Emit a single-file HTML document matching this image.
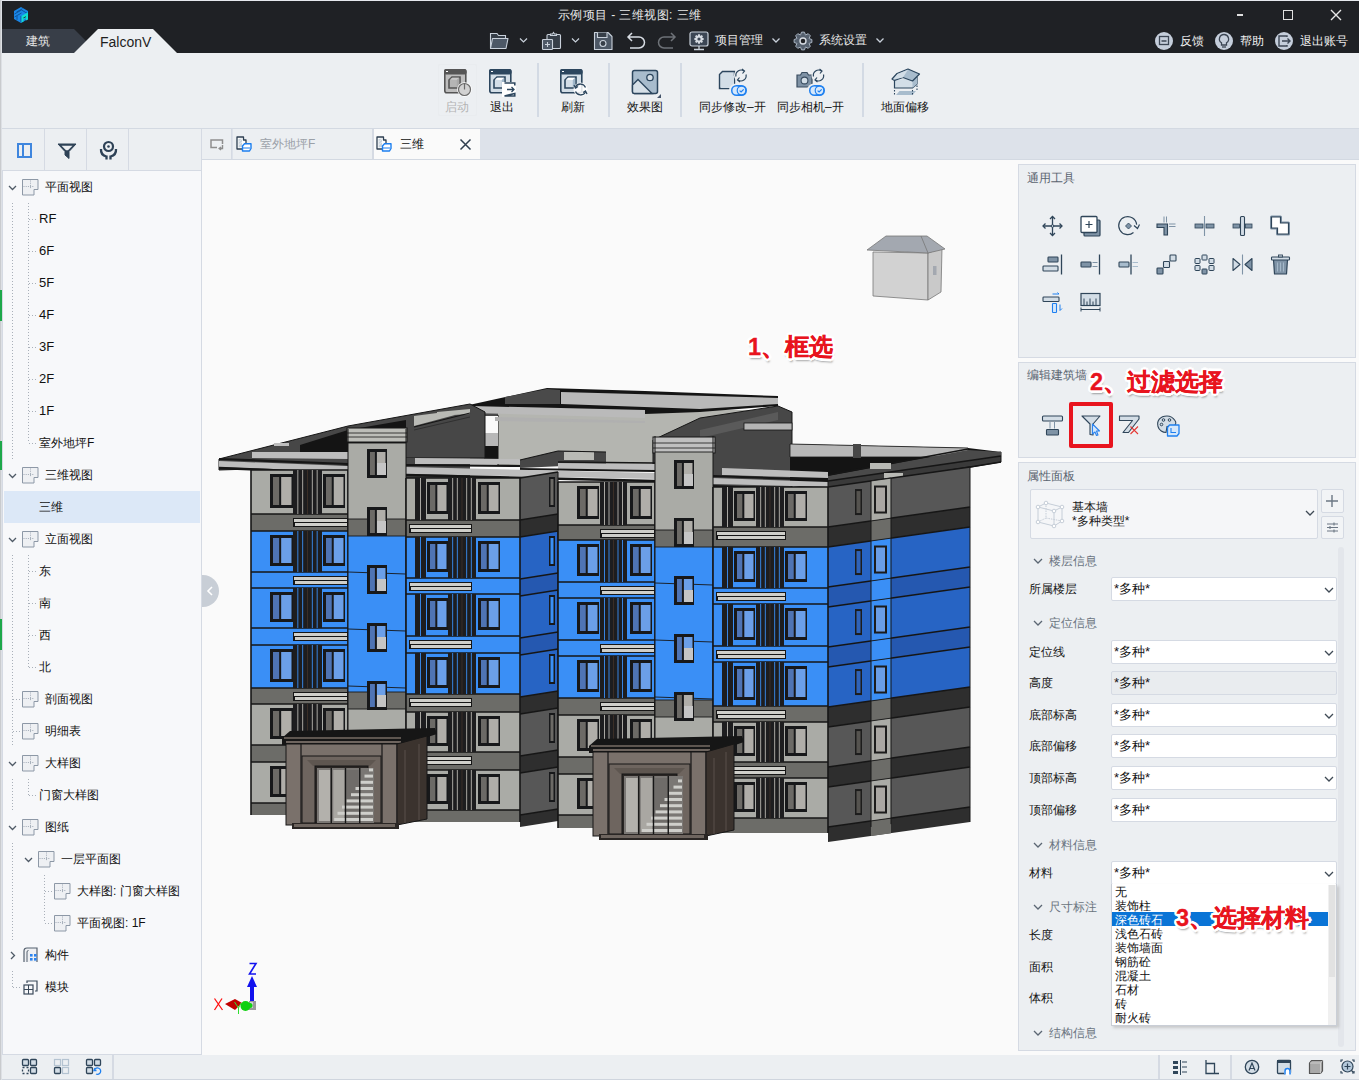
<!DOCTYPE html><html><head><meta charset="utf-8"><style>
*{box-sizing:border-box;margin:0;padding:0}
html,body{width:1359px;height:1080px;overflow:hidden;background:#fafafa;font-family:"Liberation Sans",sans-serif;font-size:12px;color:#1b1b1b}
.a{position:absolute}
.t{position:absolute;white-space:nowrap;line-height:14px}
svg{position:absolute;overflow:visible}
</style></head><body><div class="a" style="left:0px;top:0px;width:1359px;height:1080px;background:#fafafa"></div>
<div class="a" style="left:0px;top:0px;width:1359px;height:53px;background:#1f2125"></div>
<div class="a" style="left:0px;top:0px;width:1359px;height:1px;background:#e6e9ee"></div>
<div class="a" style="left:0px;top:0px;width:2px;height:1080px;background:#dde0e5"></div>
<div class="a" style="left:0px;top:0px;width:1px;height:1080px;background:#c9cbce"></div>
<div class="a" style="left:0px;top:290px;width:2px;height:31px;background:#1ea84a"></div>
<div class="a" style="left:0px;top:441px;width:2px;height:29px;background:#1ea84a"></div>
<div class="a" style="left:0px;top:619px;width:2px;height:31px;background:#1ea84a"></div>
<svg style="left:13px;top:6px" width="18" height="18" viewBox="0 0 18 18">
<path d="M1 5 L8 1 L15 5 L15 13 L8 17 L1 13 Z" fill="#1a86e6"/>
<path d="M1.5 8 L8.5 4 L14.5 7.5 M1.5 11 L8.5 7 M3.5 6 L9.5 2.7 M4 13.8 L4 10 M8 16 L8 10" stroke="#0b4f94" stroke-width="0.9" fill="none"/>
<path d="M8.5 16.5 L8.5 10 L15 6.3 L15 13.5 L13 14.6 L13 12 L10.5 13.4 L10.5 15.5 Z" fill="#10dcd0"/>
<path d="M10.5 11.6 L13 10.2 L13 11 L10.5 12.4 Z" fill="#1f2125"/>
</svg>
<div class="t" style="left:558px;top:8px;color:#e8e8e8;font-size:12px;letter-spacing:0.4px">示例项目 - 三维视图: 三维</div>
<div class="a" style="left:1237px;top:14px;width:6px;height:2px;background:#e0e0e0"></div>
<div class="a" style="left:1283px;top:10px;width:10px;height:10px;border:1.5px solid #e0e0e0"></div>
<svg style="left:1330px;top:9px" width="12" height="12"><path d="M1 1 L11 11 M11 1 L1 11" stroke="#e8e8e8" stroke-width="1.4"/></svg>
<svg style="left:0;top:0" width="200" height="55"><polygon points="2,29 74,29 98,53 2,53" fill="#383e48"/><polygon points="74,53 98,29 153,29 177,53" fill="#eceff2"/></svg>
<div class="t" style="left:26px;top:34px;color:#e6e6e6;font-size:12px">建筑</div>
<div class="t" style="left:100px;top:34px;color:#1e1e1e;font-size:14px;line-height:16px">FalconV</div>
<svg style="left:485px;top:27px" width="200" height="26" viewBox="485 27 200 26">
<path d="M490.5 48.5 V33.5 H497 L498.5 35.5 H505.5 V38.5" fill="#363e48" stroke="#c9d1db" stroke-width="1.1"/>
<path d="M490.5 48.5 L492.5 38.5 H508 L506 48.5 Z" fill="#4d5866" stroke="#c9d1db" stroke-width="1.1" stroke-linejoin="round"/>
<path d="M520 38.5 l3.5 3.5 l3.5 -3.5" stroke="#c9d1db" stroke-width="1.2" fill="none"/>
<rect x="547" y="34.5" width="13.5" height="14" rx="1" fill="#363e48" stroke="#c9d1db" stroke-width="1.1"/>
<path d="M550.5 35.5 V34 H552.5 L553.5 32.5 L554.5 34 H556.5 V35.5 Z" fill="#363e48" stroke="#c9d1db" stroke-width="1.1"/>
<rect x="542.5" y="39.5" width="10" height="10" rx="0.8" fill="#4d5866" stroke="#c9d1db" stroke-width="1.1"/>
<path d="M547.5 42 V47 M545 44.5 H550" stroke="#c9d1db" stroke-width="1.1"/>
<path d="M572 38.5 l3.5 3.5 l3.5 -3.5" stroke="#c9d1db" stroke-width="1.2" fill="none"/>
<path d="M594.5 32.5 H608 L612 36.5 V49.5 H594.5 Z" fill="#4d5866" stroke="#c9d1db" stroke-width="1.1" stroke-linejoin="round"/>
<path d="M597.5 32.5 V37.5 H607 V32.5" fill="#363e48" stroke="#c9d1db" stroke-width="1.1"/>
<circle cx="603" cy="43.5" r="3" fill="#363e48" stroke="#c9d1db" stroke-width="1.1"/>
<path d="M632 33 L628 37 L632 41 M628.5 37 H639 a5.5 5.5 0 0 1 0 11 H630" stroke="#d8dde4" stroke-width="1.5" fill="none"/>
<path d="M671 33 L675 37 L671 41 M674.5 37 H664 a5.5 5.5 0 0 0 0 11 H673" stroke="#6e7278" stroke-width="1.5" fill="none"/>
</svg>
<svg style="left:689px;top:31px" width="20" height="20" viewBox="0 0 20 20">
<rect x="1" y="1" width="18" height="14" rx="2" fill="#3c4654" stroke="#c9d1db" stroke-width="1.2"/>
<path d="M10 15 v3 M5 18.5 h10" stroke="#c9d1db" stroke-width="1.3"/>
<path d="M13.17,6.76 L14.73,7.16 L14.73,8.84 L13.17,9.24 L13.12,9.36 L13.94,10.74 L12.74,11.94 L11.36,11.12 L11.24,11.17 L10.84,12.73 L9.16,12.73 L8.76,11.17 L8.64,11.12 L7.26,11.94 L6.06,10.74 L6.88,9.36 L6.83,9.24 L5.27,8.84 L5.27,7.16 L6.83,6.76 L6.88,6.64 L6.06,5.26 L7.26,4.06 L8.64,4.88 L8.76,4.83 L9.16,3.27 L10.84,3.27 L11.24,4.83 L11.36,4.88 L12.74,4.06 L13.94,5.26 L13.12,6.64 Z" fill="#d6dbe2"/>
<circle cx="10" cy="8" r="1.6" fill="#3c4654"/>
</svg>
<div class="t" style="left:715px;top:33px;color:#e6e6e6;font-size:12px">项目管理</div>
<svg style="left:771px;top:37px" width="10" height="8"><path d="M1.5 1.5 l3.5 3.5 l3.5 -3.5" stroke="#c9d1db" stroke-width="1.3" fill="none"/></svg>
<svg style="left:793px;top:31px" width="20" height="20" viewBox="0 0 20 20">
<path d="M16.15,7.59 L18.88,8.52 L18.88,11.48 L16.15,12.41 L16.05,12.64 L17.32,15.23 L15.23,17.32 L12.64,16.05 L12.41,16.15 L11.48,18.88 L8.52,18.88 L7.59,16.15 L7.36,16.05 L4.77,17.32 L2.68,15.23 L3.95,12.64 L3.85,12.41 L1.12,11.48 L1.12,8.52 L3.85,7.59 L3.95,7.36 L2.68,4.77 L4.77,2.68 L7.36,3.95 L7.59,3.85 L8.52,1.12 L11.48,1.12 L12.41,3.85 L12.64,3.95 L15.23,2.68 L17.32,4.77 L16.05,7.36 Z" fill="#55606e" stroke="#a9b4c2" stroke-width="1"/>
<circle cx="10" cy="10" r="3" fill="#1f2125" stroke="#d6dbe2" stroke-width="1.4"/>
</svg>
<div class="t" style="left:819px;top:33px;color:#e6e6e6;font-size:12px">系统设置</div>
<svg style="left:875px;top:37px" width="10" height="8"><path d="M1.5 1.5 l3.5 3.5 l3.5 -3.5" stroke="#c9d1db" stroke-width="1.3" fill="none"/></svg>
<svg style="left:1154px;top:31px" width="200" height="20" viewBox="0 0 200 20">
<circle cx="10" cy="10" r="9" fill="#c5cedb"/>
<rect x="5.5" y="5.5" width="9" height="8" fill="none" stroke="#3c4654" stroke-width="1.3"/>
<path d="M7.5 10 h5" stroke="#3c4654" stroke-width="1.5"/>
<circle cx="70" cy="10" r="9" fill="#c5cedb"/>
<path d="M70 3.5 a4.5 4.5 0 0 1 2.5 8.3 v2.2 h-5 v-2.2 a4.5 4.5 0 0 1 2.5 -8.3 Z" fill="none" stroke="#3c4654" stroke-width="1.3"/>
<path d="M68 16 h4" stroke="#3c4654" stroke-width="1.3"/>
<circle cx="130" cy="10" r="9" fill="#c5cedb"/>
<path d="M133 6 v-1 h-8 v10 h8 v-1" fill="none" stroke="#3c4654" stroke-width="1.4"/>
<path d="M128 10 h8 M133.5 7.5 l2.5 2.5 l-2.5 2.5" fill="none" stroke="#3c4654" stroke-width="1.4"/>
</svg>
<div class="t" style="left:1180px;top:34px;color:#f0f0f0;font-size:12px">反馈</div>
<div class="t" style="left:1240px;top:34px;color:#f0f0f0;font-size:12px">帮助</div>
<div class="t" style="left:1300px;top:34px;color:#f0f0f0;font-size:12px">退出账号</div>
<div class="a" style="left:2px;top:53px;width:1357px;height:75px;background:#eceff2"></div>
<div class="a" style="left:2px;top:128px;width:1357px;height:1px;background:#d3d9e2"></div>
<div class="a" style="left:537px;top:63px;width:2px;height:54px;background:#d3dae4"></div>
<div class="a" style="left:608px;top:63px;width:2px;height:54px;background:#d3dae4"></div>
<div class="a" style="left:680px;top:63px;width:2px;height:54px;background:#d3dae4"></div>
<div class="a" style="left:862px;top:63px;width:2px;height:54px;background:#d3dae4"></div>
<div class="a" style="left:438px;top:64px;width:39px;height:52px;border:1px solid #e9ecef;border-radius:2px"></div>
<svg style="left:444px;top:69px" width="30" height="30" viewBox="0 0 30 30">
<rect x="0.8" y="0.8" width="21" height="23" rx="2" fill="#bdbdbd" stroke="#555" stroke-width="1.6"/>
<rect x="0" y="0" width="22.6" height="5.5" rx="2" fill="#555"/>
<rect x="2" y="2" width="2" height="1" fill="#fff"/>
<path d="M5 11 L8 8 H16 V19 H5 Z" fill="#b5b5b5" stroke="#555" stroke-width="1.6"/>
<path d="M5.8 10.6 L8.3 8.8 H15 L12.5 11 Z" fill="#c8c8c8"/>
<path d="M15.2 9 V18 L12.8 18 V11 Z" fill="#a8a8a8"/>
</svg>
<svg style="left:457px;top:82px" width="15" height="15" viewBox="0 0 15 15"><circle cx="7.5" cy="7.5" r="6.3" fill="#d2d2d2" stroke="#fff" stroke-width="2"/><circle cx="7.5" cy="7.5" r="6" fill="#d2d2d2" stroke="#6a6a6a" stroke-width="1.2"/><path d="M7.5 1 V7.5" stroke="#6a6a6a" stroke-width="1.2"/></svg>
<div class="t" style="left:445px;top:100px;color:#b4b4b4;font-size:12px">启动</div>
<svg style="left:489px;top:69px" width="30" height="30" viewBox="0 0 30 30">
<rect x="0.8" y="0.8" width="21" height="23" rx="2" fill="#d3dee7" stroke="#2c465e" stroke-width="1.6"/>
<rect x="0" y="0" width="22.6" height="5.5" rx="2" fill="#2c465e"/>
<rect x="2" y="2" width="2" height="1" fill="#fff"/>
<path d="M5 11 L8 8 H16 V19 H5 Z" fill="#d3dee7" stroke="#2c465e" stroke-width="1.6"/>
<path d="M5.8 10.6 L8.3 8.8 H15 L12.5 11 Z" fill="#ffffff"/>
<path d="M15.2 9 V18 L12.8 18 V11 Z" fill="#9fb6c9"/>
</svg>
<svg style="left:502px;top:82px" width="16" height="16" viewBox="0 0 16 16"><rect x="0" y="0" width="14" height="15" fill="#fff"/><path d="M2.5 1 H12.8 V3.5 M12.8 11.5 V14 H2.5 Z" fill="#fff" stroke="#2c465e" stroke-width="1.6"/><path d="M5 7.5 H12 M9.5 5 L12 7.5 L9.5 10" stroke="#2c465e" stroke-width="1.3" fill="none"/></svg>
<div class="t" style="left:490px;top:100px;color:#151515;font-size:12px">退出</div>
<svg style="left:560px;top:69px" width="30" height="30" viewBox="0 0 30 30">
<rect x="0.8" y="0.8" width="21" height="23" rx="2" fill="#d3dee7" stroke="#2c465e" stroke-width="1.6"/>
<rect x="0" y="0" width="22.6" height="5.5" rx="2" fill="#2c465e"/>
<rect x="2" y="2" width="2" height="1" fill="#fff"/>
<path d="M5 11 L8 8 H16 V19 H5 Z" fill="#d3dee7" stroke="#2c465e" stroke-width="1.6"/>
<path d="M5.8 10.6 L8.3 8.8 H15 L12.5 11 Z" fill="#ffffff"/>
<path d="M15.2 9 V18 L12.8 18 V11 Z" fill="#9fb6c9"/>
</svg>
<svg style="left:573px;top:82px" width="16" height="16" viewBox="0 0 16 16"><circle cx="7.5" cy="7.5" r="7" fill="#fff" fill-opacity="0.85"/><path d="M2.5 5 A5.5 5.5 0 0 1 12.5 5.5 M12.5 10 A5.5 5.5 0 0 1 2.5 9.5" stroke="#2c465e" stroke-width="1.3" fill="none"/><path d="M1 3 L2.5 6 L5 4.5 M14 12 L12.5 9 L10 10.5" stroke="#2c465e" stroke-width="1.3" fill="none"/></svg>
<div class="t" style="left:561px;top:100px;color:#151515;font-size:12px">刷新</div>
<svg style="left:631px;top:69px" width="32" height="30" viewBox="0 0 32 30">
<rect x="1.5" y="1.5" width="25" height="23" rx="2" fill="#a8bccd" stroke="#2c465e" stroke-width="1.5"/>
<path d="M1.5 16 L7 10.5 L21 24.5 H3.5 a2 2 0 0 1 -2 -2 Z" fill="#d6e0e8" stroke="#2c465e" stroke-width="1.4"/>
<circle cx="19" cy="8.5" r="3.2" fill="#d6e0e8" stroke="#2c465e" stroke-width="1.3"/>
<path d="M30 25 V29 H26 Z" fill="#44546a"/>
</svg>
<div class="t" style="left:627px;top:100px;color:#151515;font-size:12px">效果图</div>
<svg style="left:715px;top:66px" width="36" height="34" viewBox="715 66 36 34">
<path d="M719.5 74.5 L722.5 71.5 H734.5 V88.5 H719.5 Z" fill="#d3dee7" stroke="#2c465e" stroke-width="1.4"/>
<rect x="721" y="76" width="13" height="12" fill="#d3dee7"/>
<circle cx="741" cy="75.5" r="7" fill="#eceff2"/>
<path d="M736 76.5 A5.2 5.2 0 0 1 744 71.0 M746 74.5 A5.2 5.2 0 0 1 738 80.0" stroke="#2c465e" stroke-width="1.2" fill="none"/><path d="M742 69.0 L744.5 71.0 L742.5 73.5 M740 82.0 L737.5 80.0 L739.5 77.5" stroke="#2c465e" stroke-width="1.2" fill="none"/>
<rect x="729" y="83.5" width="20" height="14" rx="7" fill="#eceff2"/>
<rect x="731" y="85" width="16" height="11" rx="5.5" fill="#1f80f0"/><circle cx="736.5" cy="90.5" r="4" fill="#d6e8fb"/><circle cx="741.5" cy="90.5" r="4.3" fill="#d6e8fb" stroke="#1f80f0" stroke-width="1.2"/><path d="M739.6 90.6 l1.5 1.4 l2.6 -2.6" stroke="#1f80f0" stroke-width="1.2" fill="none"/>
</svg>
<div class="t" style="left:699px;top:100px;color:#151515;font-size:12px">同步修改–开</div>
<svg style="left:793px;top:66px" width="36" height="34" viewBox="793 66 36 34">
<path d="M797 75 H800.5 L802 72.5 H807 L808.5 75 H812 V87 H797 Z" fill="#7f92a5" stroke="#3a4d60" stroke-width="1.2"/>
<circle cx="804.5" cy="80.5" r="3.4" fill="#d3dee7" stroke="#3a4d60" stroke-width="1.1"/>
<circle cx="818.5" cy="75.5" r="7" fill="#eceff2"/>
<path d="M813.5 76.5 A5.2 5.2 0 0 1 821.5 71.0 M823.5 74.5 A5.2 5.2 0 0 1 815.5 80.0" stroke="#2c465e" stroke-width="1.2" fill="none"/><path d="M819.5 69.0 L822.0 71.0 L820.0 73.5 M817.5 82.0 L815.0 80.0 L817.0 77.5" stroke="#2c465e" stroke-width="1.2" fill="none"/>
<rect x="807" y="83.5" width="20" height="14" rx="7" fill="#eceff2"/>
<rect x="809" y="85" width="16" height="11" rx="5.5" fill="#1f80f0"/><circle cx="814.5" cy="90.5" r="4" fill="#d6e8fb"/><circle cx="819.5" cy="90.5" r="4.3" fill="#d6e8fb" stroke="#1f80f0" stroke-width="1.2"/><path d="M817.6 90.6 l1.5 1.4 l2.6 -2.6" stroke="#1f80f0" stroke-width="1.2" fill="none"/>
</svg>
<div class="t" style="left:777px;top:100px;color:#151515;font-size:12px">同步相机–开</div>
<svg style="left:888px;top:66px" width="34" height="32" viewBox="888 66 34 32">
<path d="M894.5 80.5 V88 H912.5 L917 84 V77" fill="#d3dee7" stroke="#2c465e" stroke-width="1.2"/>
<path d="M912.5 81 L917 77 V84 L912.5 88 Z" fill="#a8bccd"/>
<path d="M892 79 L897 73.5 L908 69 L919.5 74 L912.5 81 L903 77.5 L894.5 80.5 Z" fill="#a8bccd" stroke="#2c465e" stroke-width="1.2" stroke-linejoin="round"/>
<path d="M893 79.5 L897.5 74 L908 69.8 L903 77.5 Z" fill="#d3dee7"/>
<path d="M896 95 L899.5 91 H916 L912.5 95 Z" fill="#a8bccd"/>
<path d="M894.5 90 V96 M912.5 90 V96 M917 85.5 V91" stroke="#2c465e" stroke-width="1.1" stroke-dasharray="1.5 1.5"/>
</svg>
<div class="t" style="left:881px;top:100px;color:#151515;font-size:12px">地面偏移</div>
<div class="a" style="left:2px;top:129px;width:199px;height:925px;background:#f7f8fa"></div>
<div class="a" style="left:201px;top:129px;width:1px;height:926px;background:#d5dae3"></div>
<div class="a" style="left:2px;top:129px;width:1px;height:926px;background:#d5dae3"></div>
<div class="a" style="left:2px;top:1054px;width:200px;height:1px;background:#d5dae3"></div>
<div class="a" style="left:2px;top:129px;width:199px;height:41px;background:#eceff2"></div>
<div class="a" style="left:2px;top:170px;width:199px;height:1px;background:#d5dae3"></div>
<div class="a" style="left:44px;top:129px;width:1px;height:41px;background:#d5dae3"></div>
<div class="a" style="left:86px;top:129px;width:1px;height:41px;background:#d5dae3"></div>
<div class="a" style="left:128px;top:129px;width:1px;height:41px;background:#d5dae3"></div>
<svg style="left:17px;top:143px" width="15" height="15" viewBox="0 0 15 15"><rect x="1" y="1" width="13" height="13" fill="none" stroke="#3f86de" stroke-width="2"/><path d="M6 1 V14" stroke="#3f86de" stroke-width="2"/></svg>
<svg style="left:57px;top:143px" width="20" height="16" viewBox="0 0 20 16"><path d="M1 1 H19 L12 8.5 V15.5 L8 12 V8.5 Z" fill="#2e4257" stroke="#2e4257" stroke-width="1" stroke-linejoin="round"/><path d="M4.5 2.8 H15.5 L11 7.3 H9 Z" fill="#eceff2"/></svg>
<svg style="left:99px;top:140px" width="19" height="20" viewBox="0 0 19 20"><circle cx="9.5" cy="6.5" r="4.5" fill="none" stroke="#2e4257" stroke-width="2.2"/><circle cx="9.5" cy="6.5" r="1.3" fill="#2e4257"/><path d="M2 9 Q1.5 15 7.5 16.5 V19.5 M17 9 Q17.5 15 11.5 16.5 V19.5" fill="none" stroke="#2e4257" stroke-width="2.3"/></svg>
<div class="a" style="left:4px;top:491px;width:196px;height:32px;background:#dce8f7"></div>
<svg style="left:8px;top:185px" width="9" height="6" viewBox="0 0 9 6"><path d="M1 1 L4.5 4.5 L8 1" stroke="#4f5a66" stroke-width="1.3" fill="none"/></svg>
<svg style="left:22px;top:179px" width="17" height="17" viewBox="0 0 17 17">
<path d="M0.5 0.5 H16 V10.5 H12 V16 H0.5 Z" fill="#eef0f3" stroke="#8d98a6" stroke-width="1"/>
<path d="M8.5 1.5 V10 M1.5 7.5 H12" stroke="#8d98a6" stroke-width="0.8" stroke-dasharray="1 1.2"/>
</svg>
<div class="t" style="left:45px;top:180px;font-size:12px;color:#111">平面视图</div>
<div class="t" style="left:39px;top:212px;font-size:13px;color:#111">RF</div>
<div class="t" style="left:39px;top:244px;font-size:13px;color:#111">6F</div>
<div class="t" style="left:39px;top:276px;font-size:13px;color:#111">5F</div>
<div class="t" style="left:39px;top:308px;font-size:13px;color:#111">4F</div>
<div class="t" style="left:39px;top:340px;font-size:13px;color:#111">3F</div>
<div class="t" style="left:39px;top:372px;font-size:13px;color:#111">2F</div>
<div class="t" style="left:39px;top:404px;font-size:13px;color:#111">1F</div>
<div class="t" style="left:39px;top:436px;font-size:12px;color:#111">室外地坪F</div>
<svg style="left:8px;top:473px" width="9" height="6" viewBox="0 0 9 6"><path d="M1 1 L4.5 4.5 L8 1" stroke="#4f5a66" stroke-width="1.3" fill="none"/></svg>
<svg style="left:22px;top:467px" width="17" height="17" viewBox="0 0 17 17">
<path d="M0.5 0.5 H16 V10.5 H12 V16 H0.5 Z" fill="#eef0f3" stroke="#8d98a6" stroke-width="1"/>
<path d="M8.5 1.5 V10 M1.5 7.5 H12" stroke="#8d98a6" stroke-width="0.8" stroke-dasharray="1 1.2"/>
</svg>
<div class="t" style="left:45px;top:468px;font-size:12px;color:#111">三维视图</div>
<div class="t" style="left:39px;top:500px;font-size:12px;color:#111">三维</div>
<svg style="left:8px;top:537px" width="9" height="6" viewBox="0 0 9 6"><path d="M1 1 L4.5 4.5 L8 1" stroke="#4f5a66" stroke-width="1.3" fill="none"/></svg>
<svg style="left:22px;top:531px" width="17" height="17" viewBox="0 0 17 17">
<path d="M0.5 0.5 H16 V10.5 H12 V16 H0.5 Z" fill="#eef0f3" stroke="#8d98a6" stroke-width="1"/>
<path d="M8.5 1.5 V10 M1.5 7.5 H12" stroke="#8d98a6" stroke-width="0.8" stroke-dasharray="1 1.2"/>
</svg>
<div class="t" style="left:45px;top:532px;font-size:12px;color:#111">立面视图</div>
<div class="t" style="left:39px;top:564px;font-size:12px;color:#111">东</div>
<div class="t" style="left:39px;top:596px;font-size:12px;color:#111">南</div>
<div class="t" style="left:39px;top:628px;font-size:12px;color:#111">西</div>
<div class="t" style="left:39px;top:660px;font-size:12px;color:#111">北</div>
<svg style="left:22px;top:691px" width="17" height="17" viewBox="0 0 17 17">
<path d="M0.5 0.5 H16 V10.5 H12 V16 H0.5 Z" fill="#eef0f3" stroke="#8d98a6" stroke-width="1"/>
<path d="M8.5 1.5 V10 M1.5 7.5 H12" stroke="#8d98a6" stroke-width="0.8" stroke-dasharray="1 1.2"/>
</svg>
<div class="t" style="left:45px;top:692px;font-size:12px;color:#111">剖面视图</div>
<svg style="left:22px;top:723px" width="17" height="17" viewBox="0 0 17 17">
<path d="M0.5 0.5 H16 V10.5 H12 V16 H0.5 Z" fill="#eef0f3" stroke="#8d98a6" stroke-width="1"/>
<path d="M8.5 1.5 V10 M1.5 7.5 H12" stroke="#8d98a6" stroke-width="0.8" stroke-dasharray="1 1.2"/>
</svg>
<div class="t" style="left:45px;top:724px;font-size:12px;color:#111">明细表</div>
<svg style="left:8px;top:761px" width="9" height="6" viewBox="0 0 9 6"><path d="M1 1 L4.5 4.5 L8 1" stroke="#4f5a66" stroke-width="1.3" fill="none"/></svg>
<svg style="left:22px;top:755px" width="17" height="17" viewBox="0 0 17 17">
<path d="M0.5 0.5 H16 V10.5 H12 V16 H0.5 Z" fill="#eef0f3" stroke="#8d98a6" stroke-width="1"/>
<path d="M8.5 1.5 V10 M1.5 7.5 H12" stroke="#8d98a6" stroke-width="0.8" stroke-dasharray="1 1.2"/>
</svg>
<div class="t" style="left:45px;top:756px;font-size:12px;color:#111">大样图</div>
<div class="t" style="left:39px;top:788px;font-size:12px;color:#111">门窗大样图</div>
<svg style="left:8px;top:825px" width="9" height="6" viewBox="0 0 9 6"><path d="M1 1 L4.5 4.5 L8 1" stroke="#4f5a66" stroke-width="1.3" fill="none"/></svg>
<svg style="left:22px;top:819px" width="17" height="17" viewBox="0 0 17 17">
<path d="M0.5 0.5 H16 V10.5 H12 V16 H0.5 Z" fill="#eef0f3" stroke="#8d98a6" stroke-width="1"/>
<path d="M8.5 1.5 V10 M1.5 7.5 H12" stroke="#8d98a6" stroke-width="0.8" stroke-dasharray="1 1.2"/>
</svg>
<div class="t" style="left:45px;top:820px;font-size:12px;color:#111">图纸</div>
<svg style="left:24px;top:857px" width="9" height="6" viewBox="0 0 9 6"><path d="M1 1 L4.5 4.5 L8 1" stroke="#4f5a66" stroke-width="1.3" fill="none"/></svg>
<svg style="left:38px;top:851px" width="17" height="17" viewBox="0 0 17 17">
<path d="M0.5 0.5 H16 V10.5 H12 V16 H0.5 Z" fill="#eef0f3" stroke="#8d98a6" stroke-width="1"/>
<path d="M8.5 1.5 V10 M1.5 7.5 H12" stroke="#8d98a6" stroke-width="0.8" stroke-dasharray="1 1.2"/>
</svg>
<div class="t" style="left:61px;top:852px;font-size:12px;color:#111">一层平面图</div>
<svg style="left:54px;top:883px" width="17" height="17" viewBox="0 0 17 17">
<path d="M0.5 0.5 H16 V10.5 H12 V16 H0.5 Z" fill="#eef0f3" stroke="#8d98a6" stroke-width="1"/>
<path d="M8.5 1.5 V10 M1.5 7.5 H12" stroke="#8d98a6" stroke-width="0.8" stroke-dasharray="1 1.2"/>
</svg>
<div class="t" style="left:77px;top:884px;font-size:12px;color:#111">大样图: 门窗大样图</div>
<svg style="left:54px;top:915px" width="17" height="17" viewBox="0 0 17 17">
<path d="M0.5 0.5 H16 V10.5 H12 V16 H0.5 Z" fill="#eef0f3" stroke="#8d98a6" stroke-width="1"/>
<path d="M8.5 1.5 V10 M1.5 7.5 H12" stroke="#8d98a6" stroke-width="0.8" stroke-dasharray="1 1.2"/>
</svg>
<div class="t" style="left:77px;top:916px;font-size:12px;color:#111">平面视图: 1F</div>
<svg style="left:10px;top:951px" width="6" height="9" viewBox="0 0 6 9"><path d="M1 1 L4.5 4.5 L1 8" stroke="#4f5a66" stroke-width="1.3" fill="none"/></svg>
<div class="t" style="left:45px;top:948px;font-size:12px;color:#111">构件</div>
<div class="t" style="left:45px;top:980px;font-size:12px;color:#111">模块</div>
<svg style="left:23px;top:947px" width="16" height="16" viewBox="0 0 16 16"><path d="M1 15 V4 Q1 1 4 1 H14 V15" fill="#eef0f3" stroke="#55616e" stroke-width="1.2"/><path d="M4 15 V5 Q4 3.5 5.5 3.5" fill="none" stroke="#55616e" stroke-width="1"/><rect x="7" y="7" width="2.6" height="2.6" fill="#2b83ee"/><rect x="11" y="7" width="2.6" height="2.6" fill="#2b83ee"/><rect x="7" y="11" width="2.6" height="2.6" fill="#2b83ee"/><rect x="11" y="11" width="2.6" height="2.6" fill="#2b83ee"/></svg>
<svg style="left:23px;top:979px" width="16" height="16" viewBox="0 0 16 16"><rect x="1" y="6" width="9" height="9" fill="none" stroke="#3b4a5a" stroke-width="1.2"/><path d="M5.5 6 V15 M1 10.5 H10" stroke="#3b4a5a" stroke-width="1"/><path d="M4 4 V2 H14 V12 H12" fill="none" stroke="#3b4a5a" stroke-width="1.2"/></svg>
<div class="a" style="left:12px;top:203px;width:1px;height:257px;background:repeating-linear-gradient(#a9b0b9 0 1px,transparent 1px 3px)"></div>
<div class="a" style="left:28px;top:203px;width:1px;height:240px;background:repeating-linear-gradient(#a9b0b9 0 1px,transparent 1px 3px)"></div>
<div class="a" style="left:29px;top:219px;width:8px;height:1px;background:repeating-linear-gradient(90deg,#a9b0b9 0 1px,transparent 1px 3px)"></div>
<div class="a" style="left:29px;top:251px;width:8px;height:1px;background:repeating-linear-gradient(90deg,#a9b0b9 0 1px,transparent 1px 3px)"></div>
<div class="a" style="left:29px;top:283px;width:8px;height:1px;background:repeating-linear-gradient(90deg,#a9b0b9 0 1px,transparent 1px 3px)"></div>
<div class="a" style="left:29px;top:315px;width:8px;height:1px;background:repeating-linear-gradient(90deg,#a9b0b9 0 1px,transparent 1px 3px)"></div>
<div class="a" style="left:29px;top:347px;width:8px;height:1px;background:repeating-linear-gradient(90deg,#a9b0b9 0 1px,transparent 1px 3px)"></div>
<div class="a" style="left:29px;top:379px;width:8px;height:1px;background:repeating-linear-gradient(90deg,#a9b0b9 0 1px,transparent 1px 3px)"></div>
<div class="a" style="left:29px;top:411px;width:8px;height:1px;background:repeating-linear-gradient(90deg,#a9b0b9 0 1px,transparent 1px 3px)"></div>
<div class="a" style="left:29px;top:443px;width:8px;height:1px;background:repeating-linear-gradient(90deg,#a9b0b9 0 1px,transparent 1px 3px)"></div>
<div class="a" style="left:12px;top:555px;width:1px;height:190px;background:repeating-linear-gradient(#a9b0b9 0 1px,transparent 1px 3px)"></div>
<div class="a" style="left:28px;top:555px;width:1px;height:112px;background:repeating-linear-gradient(#a9b0b9 0 1px,transparent 1px 3px)"></div>
<div class="a" style="left:29px;top:571px;width:8px;height:1px;background:repeating-linear-gradient(90deg,#a9b0b9 0 1px,transparent 1px 3px)"></div>
<div class="a" style="left:29px;top:603px;width:8px;height:1px;background:repeating-linear-gradient(90deg,#a9b0b9 0 1px,transparent 1px 3px)"></div>
<div class="a" style="left:29px;top:635px;width:8px;height:1px;background:repeating-linear-gradient(90deg,#a9b0b9 0 1px,transparent 1px 3px)"></div>
<div class="a" style="left:29px;top:667px;width:8px;height:1px;background:repeating-linear-gradient(90deg,#a9b0b9 0 1px,transparent 1px 3px)"></div>
<div class="a" style="left:13px;top:699px;width:8px;height:1px;background:repeating-linear-gradient(90deg,#a9b0b9 0 1px,transparent 1px 3px)"></div>
<div class="a" style="left:13px;top:731px;width:8px;height:1px;background:repeating-linear-gradient(90deg,#a9b0b9 0 1px,transparent 1px 3px)"></div>
<div class="a" style="left:12px;top:779px;width:1px;height:33px;background:repeating-linear-gradient(#a9b0b9 0 1px,transparent 1px 3px)"></div>
<div class="a" style="left:28px;top:779px;width:1px;height:16px;background:repeating-linear-gradient(#a9b0b9 0 1px,transparent 1px 3px)"></div>
<div class="a" style="left:29px;top:795px;width:8px;height:1px;background:repeating-linear-gradient(90deg,#a9b0b9 0 1px,transparent 1px 3px)"></div>
<div class="a" style="left:12px;top:843px;width:1px;height:97px;background:repeating-linear-gradient(#a9b0b9 0 1px,transparent 1px 3px)"></div>
<div class="a" style="left:44px;top:875px;width:1px;height:48px;background:repeating-linear-gradient(#a9b0b9 0 1px,transparent 1px 3px)"></div>
<div class="a" style="left:45px;top:891px;width:8px;height:1px;background:repeating-linear-gradient(90deg,#a9b0b9 0 1px,transparent 1px 3px)"></div>
<div class="a" style="left:45px;top:923px;width:8px;height:1px;background:repeating-linear-gradient(90deg,#a9b0b9 0 1px,transparent 1px 3px)"></div>
<div class="a" style="left:12px;top:971px;width:1px;height:16px;background:repeating-linear-gradient(#a9b0b9 0 1px,transparent 1px 3px)"></div>
<div class="a" style="left:13px;top:987px;width:8px;height:1px;background:repeating-linear-gradient(90deg,#a9b0b9 0 1px,transparent 1px 3px)"></div>
<div class="a" style="left:202px;top:129px;width:1157px;height:30px;background:#dde2ea"></div>
<div class="a" style="left:202px;top:159px;width:1157px;height:1px;background:#d3d9e2"></div>
<div class="a" style="left:202px;top:129px;width:30px;height:30px;background:#eceff2;border-right:1px solid #d5dae3"></div>
<svg style="left:210px;top:139px" width="16" height="12" viewBox="0 0 16 12"><path d="M12.5 5 V1 H1 V8.5 H7" fill="none" stroke="#8e8e8e" stroke-width="1.5"/><path d="M12.5 6 V9.5 H9.5 M11 8 L9.2 9.5 L11 11" stroke="#8e8e8e" stroke-width="1.4" fill="none"/></svg>
<div class="a" style="left:233px;top:129px;width:140px;height:30px;background:#eceff2;border-right:1px solid #d5dae3"></div>
<svg style="left:236px;top:136px" width="16" height="16" viewBox="0 0 16 16">
<path d="M1 1 H7.5 V4 H10 V13 H1 Z" fill="#fff" stroke="#2c3e50" stroke-width="1.3" stroke-linejoin="round"/>
<path d="M2.5 3 L6 2.5 L6 11 L2.5 11.5 Z" fill="#c9d3dc"/>
<path d="M2.5 6 L6 3 M2.5 9 L6 6" stroke="#fff" stroke-width="0.6"/>
<path d="M6.5 10 L8.5 7.8 H15 V12.5 L13.5 15 H6.5 Z" fill="#fff" stroke="#1c7ff0" stroke-width="1.4" stroke-linejoin="round"/>
<path d="M7 12 H14" stroke="#1c7ff0" stroke-width="1"/>
</svg>
<div class="t" style="left:260px;top:137px;color:#9aa0a8;font-size:12px">室外地坪F</div>
<div class="a" style="left:373px;top:129px;width:107px;height:30px;background:#fafafa;border-left:1px solid #d5dae3"></div>
<svg style="left:376px;top:136px" width="16" height="16" viewBox="0 0 16 16">
<path d="M1 1 H7.5 V4 H10 V13 H1 Z" fill="#fff" stroke="#2c3e50" stroke-width="1.3" stroke-linejoin="round"/>
<path d="M2.5 3 L6 2.5 L6 11 L2.5 11.5 Z" fill="#c9d3dc"/>
<path d="M2.5 6 L6 3 M2.5 9 L6 6" stroke="#fff" stroke-width="0.6"/>
<path d="M6.5 10 L8.5 7.8 H15 V12.5 L13.5 15 H6.5 Z" fill="#fff" stroke="#1c7ff0" stroke-width="1.4" stroke-linejoin="round"/>
<path d="M7 12 H14" stroke="#1c7ff0" stroke-width="1"/>
</svg>
<div class="t" style="left:400px;top:137px;color:#111;font-size:12px">三维</div>
<svg style="left:459px;top:138px" width="13" height="13" viewBox="0 0 13 13"><path d="M1.5 1.5 L11.5 11.5 M11.5 1.5 L1.5 11.5" stroke="#2f3e4e" stroke-width="1.5"/></svg>
<svg style="left:0;top:0" width="1359" height="1080"><rect x="469" y="410" width="30" height="52" fill="#4a4a4a"/><rect x="498" y="410" width="282" height="55" fill="#b4b5b0"/><line x1="498" y1="415" x2="498" y2="465" stroke="#161616" stroke-width="1"/><rect x="484" y="416" width="14" height="17" fill="#fafafa"/><rect x="484" y="433" width="14" height="13" fill="#b8b8b8"/><rect x="484" y="446" width="14" height="14" fill="#141414"/><polygon points="469,405 547,388 645,391 778,396 778,406 700,412 645,414 469,412" fill="#141414"/><polygon points="505,397 547,389 560,390 560,404 505,404" fill="#4a4a4a"/><polygon points="561,392 778,398 778,404 700,409 561,404" fill="#b8b8b8"/><polygon points="471,406 645,410 645,418 471,413" fill="#bababa"/><polygon points="495,417 645,421 645,423 495,421" fill="#b0b0b0"/><polygon points="653,440 700,418 778,406 792,412 792,490 713,490 653,470" fill="#474747" stroke="#161616" stroke-width="1"/><polygon points="700,430 778,412 778,420 700,438" fill="#5a5a5a"/><rect x="744" y="423" width="48" height="7" fill="#b5b5b5" stroke="#161616" stroke-width="0.8"/><polygon points="219,459 348,426 470,404 485,412 485,458 406,458 348,466 219,470" fill="#474747" stroke="#161616" stroke-width="1"/><polygon points="300,445 348,430 406,420 406,458 348,458 300,458" fill="#141414"/><polygon points="252,452 348,452 348,459 252,458" fill="#bdbdbd"/><polygon points="219,461 348,466 348,472 219,467" fill="#bdbdbd"/><line x1="219" y1="459" x2="348" y2="464" stroke="#161616" stroke-width="2.2"/><line x1="219" y1="468" x2="348" y2="473" stroke="#161616" stroke-width="2.4"/><rect x="274" y="443" width="15" height="3" fill="#bdbdbd"/><polygon points="414,416 437,413 455,415 414,426" fill="#b9bab5"/><polygon points="437,412 470,409 470,414 437,416" fill="#b9bab5"/><line x1="414" y1="427" x2="470" y2="413" stroke="#161616" stroke-width="1.2"/><line x1="414" y1="430" x2="470" y2="417" stroke="#2a2a2a" stroke-width="0.8"/><rect x="347" y="428" width="60" height="14" fill="#bcbdb8" stroke="#161616" stroke-width="1"/><line x1="347" y1="433" x2="407" y2="433" stroke="#161616" stroke-width="0.8"/><line x1="347" y1="437" x2="407" y2="437" stroke="#161616" stroke-width="0.8"/><polygon points="406,458 470,458 470,480 406,480" fill="#474747"/><polygon points="520,460 558,451 606,452 606,464 520,468" fill="#474747"/><rect x="564" y="452" width="30" height="8" fill="#b9bab5"/><polygon points="415,458 520,459 520,464 415,464" fill="#bdbdbd"/><polygon points="558,463 655,464 655,470 558,469" fill="#bdbdbd"/><line x1="520" y1="460" x2="558" y2="451" stroke="#161616" stroke-width="1.2"/><line x1="558" y1="451" x2="606" y2="452" stroke="#161616" stroke-width="1.2"/><line x1="406" y1="465" x2="520" y2="466" stroke="#161616" stroke-width="2.2"/><line x1="558" y1="462" x2="655" y2="463" stroke="#161616" stroke-width="1.6"/><line x1="520" y1="469" x2="655" y2="471" stroke="#161616" stroke-width="2.2"/><polygon points="406,467 655,473 655,479 406,474" fill="#bdbdbd"/><line x1="406" y1="475" x2="655" y2="481" stroke="#161616" stroke-width="2.4"/><polygon points="790,444 968,448 1001,452 1001,462 828,490 790,486" fill="#141414"/><polygon points="790,444 968,448 968,457 790,457" fill="#b8b8b8" stroke="#161616" stroke-width="0.8"/><rect x="853" y="444" width="8" height="14" fill="#474747"/><polygon points="722,468 828,472 828,478 722,475" fill="#bdbdbd"/><polygon points="713,478 828,482 828,487 713,484" fill="#bdbdbd"/><line x1="713" y1="476" x2="828" y2="480" stroke="#161616" stroke-width="2"/><line x1="713" y1="486" x2="828" y2="490" stroke="#161616" stroke-width="2.2"/><polygon points="828,480 968,457 1001,452 1001,462 828,491" fill="#3a3a3a" stroke="#161616" stroke-width="1"/><polygon points="828,476 968,450 1001,452 1001,456 828,481" fill="#4a4a4a"/><line x1="828" y1="475" x2="968" y2="449" stroke="#161616" stroke-width="1.6"/><line x1="828" y1="481" x2="1001" y2="456" stroke="#161616" stroke-width="1.6"/><line x1="828" y1="490" x2="1001" y2="462" stroke="#161616" stroke-width="1.4"/><rect x="870" y="463" width="21" height="6" fill="#b9bab5"/><rect x="884" y="473" width="19" height="6" fill="#b9bab5"/><rect x="653" y="437" width="62" height="16" fill="#c0c0c0" stroke="#161616" stroke-width="1"/><line x1="653" y1="443" x2="715" y2="443" stroke="#161616" stroke-width="0.8"/><line x1="653" y1="448" x2="715" y2="448" stroke="#161616" stroke-width="0.8"/><polygon points="520,478 558,472 558,514 520,520" fill="#575757"/><line x1="520" y1="478" x2="558" y2="472" stroke="#161616" stroke-width="1.5"/><polygon points="520,520 558,514 558,531 520,537" fill="#2e2e2e"/><line x1="520" y1="520" x2="558" y2="514" stroke="#161616" stroke-width="1.5"/><polygon points="520,537 558,531 558,573 520,579" fill="#2764c4"/><line x1="520" y1="537" x2="558" y2="531" stroke="#161616" stroke-width="1.5"/><polygon points="520,579 558,573 558,590 520,596" fill="#2558b0"/><line x1="520" y1="579" x2="558" y2="573" stroke="#161616" stroke-width="1.5"/><polygon points="520,596 558,590 558,632 520,638" fill="#2764c4"/><line x1="520" y1="596" x2="558" y2="590" stroke="#161616" stroke-width="1.5"/><polygon points="520,638 558,632 558,649 520,655" fill="#2558b0"/><line x1="520" y1="638" x2="558" y2="632" stroke="#161616" stroke-width="1.5"/><polygon points="520,655 558,649 558,691 520,697" fill="#2764c4"/><line x1="520" y1="655" x2="558" y2="649" stroke="#161616" stroke-width="1.5"/><polygon points="520,697 558,691 558,708 520,714" fill="#2e2e2e"/><line x1="520" y1="697" x2="558" y2="691" stroke="#161616" stroke-width="1.5"/><polygon points="520,714 558,708 558,750 520,756" fill="#575757"/><line x1="520" y1="714" x2="558" y2="708" stroke="#161616" stroke-width="1.5"/><polygon points="520,756 558,750 558,767 520,773" fill="#2e2e2e"/><line x1="520" y1="756" x2="558" y2="750" stroke="#161616" stroke-width="1.5"/><polygon points="520,773 558,767 558,809 520,815" fill="#575757"/><line x1="520" y1="773" x2="558" y2="767" stroke="#161616" stroke-width="1.5"/><polygon points="520,815 558,809 558,821 520,827" fill="#2e2e2e"/><line x1="520" y1="815" x2="558" y2="809" stroke="#161616" stroke-width="1.5"/><line x1="558" y1="472" x2="558" y2="821" stroke="#161616" stroke-width="1"/><rect x="549" y="477" width="6" height="30" fill="#17181a"/><rect x="550.5" y="479" width="3" height="26" fill="#6c6a66"/><rect x="549" y="536" width="6" height="30" fill="#17181a"/><rect x="550.5" y="538" width="3" height="26" fill="#3a8ff6"/><rect x="549" y="595" width="6" height="30" fill="#17181a"/><rect x="550.5" y="597" width="3" height="26" fill="#3a8ff6"/><rect x="549" y="654" width="6" height="30" fill="#17181a"/><rect x="550.5" y="656" width="3" height="26" fill="#3a8ff6"/><rect x="549" y="713" width="6" height="30" fill="#17181a"/><rect x="550.5" y="715" width="3" height="26" fill="#6c6a66"/><rect x="549" y="772" width="6" height="30" fill="#17181a"/><rect x="550.5" y="774" width="3" height="26" fill="#6c6a66"/><polygon points="828,487 970,467 970,507 828,527" fill="#575757"/><line x1="828" y1="487" x2="970" y2="467" stroke="#161616" stroke-width="1.5"/><polygon points="828,527 970,507 970,527 828,547" fill="#2e2e2e"/><line x1="828" y1="527" x2="970" y2="507" stroke="#161616" stroke-width="1.5"/><polygon points="828,547 970,527 970,567 828,587" fill="#2764c4"/><line x1="828" y1="547" x2="970" y2="527" stroke="#161616" stroke-width="1.5"/><polygon points="828,587 970,567 970,587 828,607" fill="#2558b0"/><line x1="828" y1="587" x2="970" y2="567" stroke="#161616" stroke-width="1.5"/><polygon points="828,607 970,587 970,627 828,647" fill="#2764c4"/><line x1="828" y1="607" x2="970" y2="587" stroke="#161616" stroke-width="1.5"/><polygon points="828,647 970,627 970,647 828,667" fill="#2558b0"/><line x1="828" y1="647" x2="970" y2="627" stroke="#161616" stroke-width="1.5"/><polygon points="828,667 970,647 970,687 828,707" fill="#2764c4"/><line x1="828" y1="667" x2="970" y2="647" stroke="#161616" stroke-width="1.5"/><polygon points="828,707 970,687 970,707 828,727" fill="#2e2e2e"/><line x1="828" y1="707" x2="970" y2="687" stroke="#161616" stroke-width="1.5"/><polygon points="828,727 970,707 970,747 828,767" fill="#575757"/><line x1="828" y1="727" x2="970" y2="707" stroke="#161616" stroke-width="1.5"/><polygon points="828,767 970,747 970,767 828,787" fill="#2e2e2e"/><line x1="828" y1="767" x2="970" y2="747" stroke="#161616" stroke-width="1.5"/><polygon points="828,787 970,767 970,807 828,827" fill="#575757"/><line x1="828" y1="787" x2="970" y2="767" stroke="#161616" stroke-width="1.5"/><polygon points="828,827 970,807 970,822 828,842" fill="#2e2e2e"/><line x1="828" y1="827" x2="970" y2="807" stroke="#161616" stroke-width="1.5"/><line x1="970" y1="467" x2="970" y2="822" stroke="#161616" stroke-width="1"/><polygon points="871,480.943661971831 891,478.1267605633803 891,518.1267605633802 871,520.943661971831" fill="#aaaba6"/><line x1="871" y1="480.943661971831" x2="891" y2="478.1267605633803" stroke="#161616" stroke-width="0.9"/><polygon points="871,520.943661971831 891,518.1267605633802 891,538.1267605633802 871,540.943661971831" fill="#6c6c68"/><line x1="871" y1="520.943661971831" x2="891" y2="518.1267605633802" stroke="#161616" stroke-width="0.9"/><polygon points="871,540.943661971831 891,538.1267605633802 891,578.1267605633802 871,580.943661971831" fill="#3a8ff6"/><line x1="871" y1="540.943661971831" x2="891" y2="538.1267605633802" stroke="#161616" stroke-width="0.9"/><polygon points="871,580.943661971831 891,578.1267605633802 891,598.1267605633802 871,600.943661971831" fill="#3a8ff6"/><line x1="871" y1="580.943661971831" x2="891" y2="578.1267605633802" stroke="#161616" stroke-width="0.9"/><polygon points="871,600.943661971831 891,598.1267605633802 891,638.1267605633802 871,640.943661971831" fill="#3a8ff6"/><line x1="871" y1="600.943661971831" x2="891" y2="598.1267605633802" stroke="#161616" stroke-width="0.9"/><polygon points="871,640.943661971831 891,638.1267605633802 891,658.1267605633802 871,660.943661971831" fill="#3a8ff6"/><line x1="871" y1="640.943661971831" x2="891" y2="638.1267605633802" stroke="#161616" stroke-width="0.9"/><polygon points="871,660.943661971831 891,658.1267605633802 891,698.1267605633802 871,700.943661971831" fill="#3a8ff6"/><line x1="871" y1="660.943661971831" x2="891" y2="658.1267605633802" stroke="#161616" stroke-width="0.9"/><polygon points="871,700.943661971831 891,698.1267605633802 891,718.1267605633802 871,720.943661971831" fill="#6c6c68"/><line x1="871" y1="700.943661971831" x2="891" y2="698.1267605633802" stroke="#161616" stroke-width="0.9"/><polygon points="871,720.943661971831 891,718.1267605633802 891,758.1267605633802 871,760.943661971831" fill="#aaaba6"/><line x1="871" y1="720.943661971831" x2="891" y2="718.1267605633802" stroke="#161616" stroke-width="0.9"/><polygon points="871,760.943661971831 891,758.1267605633802 891,778.1267605633802 871,780.943661971831" fill="#6c6c68"/><line x1="871" y1="760.943661971831" x2="891" y2="758.1267605633802" stroke="#161616" stroke-width="0.9"/><polygon points="871,780.943661971831 891,778.1267605633802 891,818.1267605633802 871,820.943661971831" fill="#aaaba6"/><line x1="871" y1="780.943661971831" x2="891" y2="778.1267605633802" stroke="#161616" stroke-width="0.9"/><polygon points="871,820.943661971831 891,818.1267605633802 891,833.1267605633802 871,835.943661971831" fill="#6c6c68"/><line x1="871" y1="820.943661971831" x2="891" y2="818.1267605633802" stroke="#161616" stroke-width="0.9"/><line x1="871" y1="480.943661971831" x2="871" y2="826.943661971831" stroke="#161616" stroke-width="1"/><line x1="891" y1="478.1267605633803" x2="891" y2="824.1267605633802" stroke="#161616" stroke-width="1"/><rect x="874" y="485.5211267605634" width="13" height="28" fill="#1c1c1c"/><rect x="876" y="487.5211267605634" width="9" height="24" fill="#aaa7a3"/><rect x="874" y="545.5211267605633" width="13" height="28" fill="#1c1c1c"/><rect x="876" y="547.5211267605633" width="9" height="24" fill="#6a9ee6"/><rect x="874" y="605.5211267605633" width="13" height="28" fill="#1c1c1c"/><rect x="876" y="607.5211267605633" width="9" height="24" fill="#6a9ee6"/><rect x="874" y="665.5211267605633" width="13" height="28" fill="#1c1c1c"/><rect x="876" y="667.5211267605633" width="9" height="24" fill="#6a9ee6"/><rect x="874" y="725.5211267605633" width="13" height="28" fill="#1c1c1c"/><rect x="876" y="727.5211267605633" width="9" height="24" fill="#aaa7a3"/><rect x="874" y="785.5211267605633" width="13" height="28" fill="#1c1c1c"/><rect x="876" y="787.5211267605633" width="9" height="24" fill="#aaa7a3"/><rect x="855" y="489.056338028169" width="7" height="26" fill="#1c1c1c"/><rect x="856.5" y="491.056338028169" width="4" height="22" fill="#55534f"/><rect x="855" y="549.056338028169" width="7" height="26" fill="#1c1c1c"/><rect x="856.5" y="551.056338028169" width="4" height="22" fill="#2f62b8"/><rect x="855" y="609.056338028169" width="7" height="26" fill="#1c1c1c"/><rect x="856.5" y="611.056338028169" width="4" height="22" fill="#2f62b8"/><rect x="855" y="669.056338028169" width="7" height="26" fill="#1c1c1c"/><rect x="856.5" y="671.056338028169" width="4" height="22" fill="#2f62b8"/><rect x="855" y="729.056338028169" width="7" height="26" fill="#1c1c1c"/><rect x="856.5" y="731.056338028169" width="4" height="22" fill="#55534f"/><rect x="855" y="789.056338028169" width="7" height="26" fill="#1c1c1c"/><rect x="856.5" y="791.056338028169" width="4" height="22" fill="#55534f"/><rect x="251" y="470" width="97" height="44" fill="#aaaba6"/><line x1="251" y1="470" x2="348" y2="470" stroke="#161616" stroke-width="1.6"/><rect x="251" y="514" width="97" height="17" fill="#6c6c68"/><line x1="251" y1="514" x2="348" y2="514" stroke="#161616" stroke-width="1.6"/><rect x="251" y="531" width="97" height="41" fill="#3a8ff6"/><line x1="251" y1="531" x2="348" y2="531" stroke="#161616" stroke-width="1.6"/><rect x="251" y="572" width="97" height="16" fill="#3a8ff6"/><line x1="251" y1="572" x2="348" y2="572" stroke="#161616" stroke-width="1.6"/><rect x="251" y="588" width="97" height="40" fill="#3a8ff6"/><line x1="251" y1="588" x2="348" y2="588" stroke="#161616" stroke-width="1.6"/><rect x="251" y="628" width="97" height="17" fill="#3a8ff6"/><line x1="251" y1="628" x2="348" y2="628" stroke="#161616" stroke-width="1.6"/><rect x="251" y="645" width="97" height="43" fill="#3a8ff6"/><line x1="251" y1="645" x2="348" y2="645" stroke="#161616" stroke-width="1.6"/><rect x="251" y="688" width="97" height="16" fill="#6c6c68"/><line x1="251" y1="688" x2="348" y2="688" stroke="#161616" stroke-width="1.6"/><rect x="251" y="704" width="97" height="41" fill="#aaaba6"/><line x1="251" y1="704" x2="348" y2="704" stroke="#161616" stroke-width="1.6"/><rect x="251" y="745" width="97" height="17" fill="#6c6c68"/><line x1="251" y1="745" x2="348" y2="745" stroke="#161616" stroke-width="1.6"/><rect x="251" y="762" width="97" height="41" fill="#aaaba6"/><line x1="251" y1="762" x2="348" y2="762" stroke="#161616" stroke-width="1.6"/><rect x="251" y="803" width="97" height="12" fill="#6c6c68"/><line x1="251" y1="803" x2="348" y2="803" stroke="#161616" stroke-width="1.6"/><rect x="270" y="474" width="23" height="34" fill="#17181a"/><rect x="273" y="477" width="6.160000000000025" height="28" fill="#6c6a66"/><rect x="281.16" y="477" width="10.339999999999975" height="28" fill="#b0aea9"/><rect x="293" y="470" width="29" height="44" fill="#1d1d1f"/><line x1="297.8333333333333" y1="470" x2="297.8333333333333" y2="514" stroke="#b8b6b0" stroke-width="0.9"/><line x1="302.6666666666667" y1="470" x2="302.6666666666667" y2="514" stroke="#b8b6b0" stroke-width="0.9"/><line x1="307.5" y1="470" x2="307.5" y2="514" stroke="#3d3028" stroke-width="0.9"/><line x1="312.3333333333333" y1="470" x2="312.3333333333333" y2="514" stroke="#b8b6b0" stroke-width="0.9"/><line x1="317.1666666666667" y1="470" x2="317.1666666666667" y2="514" stroke="#b8b6b0" stroke-width="0.9"/><rect x="323" y="474" width="22" height="34" fill="#17181a"/><rect x="326" y="477" width="5.740000000000009" height="28" fill="#6c6a66"/><rect x="333.74" y="477" width="9.759999999999991" height="28" fill="#b0aea9"/><rect x="293" y="518" width="55" height="9" fill="#161616"/><rect x="294" y="519" width="53" height="3" fill="#cfcfca"/><rect x="295" y="523" width="52" height="3" fill="#cfcfca"/><rect x="270" y="535" width="23" height="31" fill="#17181a"/><rect x="273" y="538" width="6.160000000000025" height="25" fill="#4f74b4"/><rect x="281.16" y="538" width="10.339999999999975" height="25" fill="#6b9fe8"/><rect x="293" y="531" width="29" height="41" fill="#1d1d1f"/><line x1="297.8333333333333" y1="531" x2="297.8333333333333" y2="572" stroke="#3a8ff6" stroke-width="0.9"/><line x1="302.6666666666667" y1="531" x2="302.6666666666667" y2="572" stroke="#3a8ff6" stroke-width="0.9"/><line x1="307.5" y1="531" x2="307.5" y2="572" stroke="#3d3028" stroke-width="0.9"/><line x1="312.3333333333333" y1="531" x2="312.3333333333333" y2="572" stroke="#3a8ff6" stroke-width="0.9"/><line x1="317.1666666666667" y1="531" x2="317.1666666666667" y2="572" stroke="#3a8ff6" stroke-width="0.9"/><rect x="323" y="535" width="22" height="31" fill="#17181a"/><rect x="326" y="538" width="5.740000000000009" height="25" fill="#4f74b4"/><rect x="333.74" y="538" width="9.759999999999991" height="25" fill="#6b9fe8"/><rect x="293" y="576" width="55" height="9" fill="#161616"/><rect x="294" y="577" width="53" height="3" fill="#cfcfca"/><rect x="295" y="581" width="52" height="3" fill="#cfcfca"/><rect x="270" y="592" width="23" height="30" fill="#17181a"/><rect x="273" y="595" width="6.160000000000025" height="24" fill="#4f74b4"/><rect x="281.16" y="595" width="10.339999999999975" height="24" fill="#6b9fe8"/><rect x="293" y="588" width="29" height="40" fill="#1d1d1f"/><line x1="297.8333333333333" y1="588" x2="297.8333333333333" y2="628" stroke="#3a8ff6" stroke-width="0.9"/><line x1="302.6666666666667" y1="588" x2="302.6666666666667" y2="628" stroke="#3a8ff6" stroke-width="0.9"/><line x1="307.5" y1="588" x2="307.5" y2="628" stroke="#3d3028" stroke-width="0.9"/><line x1="312.3333333333333" y1="588" x2="312.3333333333333" y2="628" stroke="#3a8ff6" stroke-width="0.9"/><line x1="317.1666666666667" y1="588" x2="317.1666666666667" y2="628" stroke="#3a8ff6" stroke-width="0.9"/><rect x="323" y="592" width="22" height="30" fill="#17181a"/><rect x="326" y="595" width="5.740000000000009" height="24" fill="#4f74b4"/><rect x="333.74" y="595" width="9.759999999999991" height="24" fill="#6b9fe8"/><rect x="293" y="632" width="55" height="9" fill="#161616"/><rect x="294" y="633" width="53" height="3" fill="#cfcfca"/><rect x="295" y="637" width="52" height="3" fill="#cfcfca"/><rect x="270" y="649" width="23" height="33" fill="#17181a"/><rect x="273" y="652" width="6.160000000000025" height="27" fill="#4f74b4"/><rect x="281.16" y="652" width="10.339999999999975" height="27" fill="#6b9fe8"/><rect x="293" y="645" width="29" height="43" fill="#1d1d1f"/><line x1="297.8333333333333" y1="645" x2="297.8333333333333" y2="688" stroke="#3a8ff6" stroke-width="0.9"/><line x1="302.6666666666667" y1="645" x2="302.6666666666667" y2="688" stroke="#3a8ff6" stroke-width="0.9"/><line x1="307.5" y1="645" x2="307.5" y2="688" stroke="#3d3028" stroke-width="0.9"/><line x1="312.3333333333333" y1="645" x2="312.3333333333333" y2="688" stroke="#3a8ff6" stroke-width="0.9"/><line x1="317.1666666666667" y1="645" x2="317.1666666666667" y2="688" stroke="#3a8ff6" stroke-width="0.9"/><rect x="323" y="649" width="22" height="33" fill="#17181a"/><rect x="326" y="652" width="5.740000000000009" height="27" fill="#4f74b4"/><rect x="333.74" y="652" width="9.759999999999991" height="27" fill="#6b9fe8"/><rect x="293" y="692" width="55" height="9" fill="#161616"/><rect x="294" y="693" width="53" height="3" fill="#cfcfca"/><rect x="295" y="697" width="52" height="3" fill="#cfcfca"/><rect x="270" y="708" width="23" height="31" fill="#17181a"/><rect x="273" y="711" width="6.160000000000025" height="25" fill="#6c6a66"/><rect x="281.16" y="711" width="10.339999999999975" height="25" fill="#b0aea9"/><rect x="293" y="704" width="29" height="41" fill="#1d1d1f"/><line x1="297.8333333333333" y1="704" x2="297.8333333333333" y2="745" stroke="#b8b6b0" stroke-width="0.9"/><line x1="302.6666666666667" y1="704" x2="302.6666666666667" y2="745" stroke="#b8b6b0" stroke-width="0.9"/><line x1="307.5" y1="704" x2="307.5" y2="745" stroke="#3d3028" stroke-width="0.9"/><line x1="312.3333333333333" y1="704" x2="312.3333333333333" y2="745" stroke="#b8b6b0" stroke-width="0.9"/><line x1="317.1666666666667" y1="704" x2="317.1666666666667" y2="745" stroke="#b8b6b0" stroke-width="0.9"/><rect x="323" y="708" width="22" height="31" fill="#17181a"/><rect x="326" y="711" width="5.740000000000009" height="25" fill="#6c6a66"/><rect x="333.74" y="711" width="9.759999999999991" height="25" fill="#b0aea9"/><rect x="293" y="749" width="55" height="9" fill="#161616"/><rect x="294" y="750" width="53" height="3" fill="#cfcfca"/><rect x="295" y="754" width="52" height="3" fill="#cfcfca"/><rect x="270" y="766" width="23" height="31" fill="#17181a"/><rect x="273" y="769" width="6.160000000000025" height="25" fill="#6c6a66"/><rect x="281.16" y="769" width="10.339999999999975" height="25" fill="#b0aea9"/><rect x="293" y="762" width="29" height="41" fill="#1d1d1f"/><line x1="297.8333333333333" y1="762" x2="297.8333333333333" y2="803" stroke="#b8b6b0" stroke-width="0.9"/><line x1="302.6666666666667" y1="762" x2="302.6666666666667" y2="803" stroke="#b8b6b0" stroke-width="0.9"/><line x1="307.5" y1="762" x2="307.5" y2="803" stroke="#3d3028" stroke-width="0.9"/><line x1="312.3333333333333" y1="762" x2="312.3333333333333" y2="803" stroke="#b8b6b0" stroke-width="0.9"/><line x1="317.1666666666667" y1="762" x2="317.1666666666667" y2="803" stroke="#b8b6b0" stroke-width="0.9"/><rect x="323" y="766" width="22" height="31" fill="#17181a"/><rect x="326" y="769" width="5.740000000000009" height="25" fill="#6c6a66"/><rect x="333.74" y="769" width="9.759999999999991" height="25" fill="#b0aea9"/><line x1="251" y1="470" x2="251" y2="815" stroke="#161616" stroke-width="1.6"/><line x1="348" y1="470" x2="348" y2="815" stroke="#161616" stroke-width="1.6"/><rect x="348" y="443" width="58" height="76" fill="#aaaba6"/><line x1="348" y1="443" x2="406" y2="443" stroke="#161616" stroke-width="0.9"/><rect x="348" y="519" width="58" height="17" fill="#6c6c68"/><line x1="348" y1="519" x2="406" y2="519" stroke="#161616" stroke-width="0.9"/><rect x="348" y="536" width="58" height="156" fill="#3a8ff6"/><line x1="348" y1="536" x2="406" y2="536" stroke="#161616" stroke-width="0.9"/><rect x="348" y="692" width="58" height="17" fill="#6c6c68"/><line x1="348" y1="692" x2="406" y2="692" stroke="#161616" stroke-width="0.9"/><rect x="348" y="709" width="58" height="51" fill="#aaaba6"/><line x1="348" y1="709" x2="406" y2="709" stroke="#161616" stroke-width="0.9"/><line x1="348" y1="572" x2="406" y2="574" stroke="#161616" stroke-width="0.9"/><line x1="348" y1="629" x2="406" y2="631" stroke="#161616" stroke-width="0.9"/><line x1="348" y1="686" x2="406" y2="688" stroke="#161616" stroke-width="0.9"/><rect x="367" y="449" width="20" height="29" fill="#17181a"/><rect x="370" y="452" width="4.899999999999977" height="23" fill="#6c6a66"/><rect x="376.9" y="452" width="8.600000000000023" height="23" fill="#b0aea9"/><rect x="377" y="463" width="9" height="12" fill="#c5c5c5"/><rect x="367" y="507" width="20" height="29" fill="#17181a"/><rect x="370" y="510" width="4.899999999999977" height="23" fill="#6c6a66"/><rect x="376.9" y="510" width="8.600000000000023" height="23" fill="#b0aea9"/><rect x="377" y="521" width="9" height="12" fill="#c5c5c5"/><rect x="367" y="565" width="20" height="29" fill="#17181a"/><rect x="370" y="568" width="4.899999999999977" height="23" fill="#4f74b4"/><rect x="376.9" y="568" width="8.600000000000023" height="23" fill="#6b9fe8"/><rect x="377" y="579" width="9" height="12" fill="#c5c5c5"/><rect x="367" y="623" width="20" height="29" fill="#17181a"/><rect x="370" y="626" width="4.899999999999977" height="23" fill="#4f74b4"/><rect x="376.9" y="626" width="8.600000000000023" height="23" fill="#6b9fe8"/><rect x="377" y="637" width="9" height="12" fill="#c5c5c5"/><rect x="367" y="681" width="20" height="29" fill="#17181a"/><rect x="370" y="684" width="4.899999999999977" height="23" fill="#4f74b4"/><rect x="376.9" y="684" width="8.600000000000023" height="23" fill="#6b9fe8"/><rect x="377" y="695" width="9" height="12" fill="#c5c5c5"/><line x1="348" y1="429" x2="348" y2="760" stroke="#161616" stroke-width="1"/><line x1="406" y1="429" x2="406" y2="760" stroke="#161616" stroke-width="1"/><rect x="406" y="478" width="114" height="42" fill="#aaaba6"/><line x1="406" y1="478" x2="520" y2="478" stroke="#161616" stroke-width="1.6"/><rect x="406" y="520" width="114" height="17" fill="#6c6c68"/><line x1="406" y1="520" x2="520" y2="520" stroke="#161616" stroke-width="1.6"/><rect x="406" y="537" width="114" height="41" fill="#3a8ff6"/><line x1="406" y1="537" x2="520" y2="537" stroke="#161616" stroke-width="1.6"/><rect x="406" y="578" width="114" height="16" fill="#3a8ff6"/><line x1="406" y1="578" x2="520" y2="578" stroke="#161616" stroke-width="1.6"/><rect x="406" y="594" width="114" height="42" fill="#3a8ff6"/><line x1="406" y1="594" x2="520" y2="594" stroke="#161616" stroke-width="1.6"/><rect x="406" y="636" width="114" height="17" fill="#3a8ff6"/><line x1="406" y1="636" x2="520" y2="636" stroke="#161616" stroke-width="1.6"/><rect x="406" y="653" width="114" height="41" fill="#3a8ff6"/><line x1="406" y1="653" x2="520" y2="653" stroke="#161616" stroke-width="1.6"/><rect x="406" y="694" width="114" height="18" fill="#6c6c68"/><line x1="406" y1="694" x2="520" y2="694" stroke="#161616" stroke-width="1.6"/><rect x="406" y="712" width="114" height="40" fill="#aaaba6"/><line x1="406" y1="712" x2="520" y2="712" stroke="#161616" stroke-width="1.6"/><rect x="406" y="752" width="114" height="18" fill="#6c6c68"/><line x1="406" y1="752" x2="520" y2="752" stroke="#161616" stroke-width="1.6"/><rect x="406" y="770" width="114" height="40" fill="#aaaba6"/><line x1="406" y1="770" x2="520" y2="770" stroke="#161616" stroke-width="1.6"/><rect x="406" y="810" width="114" height="12" fill="#6c6c68"/><line x1="406" y1="810" x2="520" y2="810" stroke="#161616" stroke-width="1.6"/><rect x="415" y="478" width="11" height="42" fill="#1d1d1f"/><line x1="420.5" y1="478" x2="420.5" y2="520" stroke="#b8b6b0" stroke-width="0.9"/><rect x="427" y="482" width="21" height="32" fill="#17181a"/><rect x="430" y="485" width="5.319999999999993" height="26" fill="#6c6a66"/><rect x="437.32" y="485" width="9.180000000000007" height="26" fill="#b0aea9"/><rect x="448" y="478" width="28" height="42" fill="#1d1d1f"/><line x1="452.6666666666667" y1="478" x2="452.6666666666667" y2="520" stroke="#b8b6b0" stroke-width="0.9"/><line x1="457.3333333333333" y1="478" x2="457.3333333333333" y2="520" stroke="#b8b6b0" stroke-width="0.9"/><line x1="462.0" y1="478" x2="462.0" y2="520" stroke="#3d3028" stroke-width="0.9"/><line x1="466.6666666666667" y1="478" x2="466.6666666666667" y2="520" stroke="#b8b6b0" stroke-width="0.9"/><line x1="471.3333333333333" y1="478" x2="471.3333333333333" y2="520" stroke="#b8b6b0" stroke-width="0.9"/><rect x="478" y="482" width="22" height="32" fill="#17181a"/><rect x="481" y="485" width="5.740000000000009" height="26" fill="#6c6a66"/><rect x="488.74" y="485" width="9.759999999999991" height="26" fill="#b0aea9"/><rect x="409" y="524" width="63" height="9" fill="#161616"/><rect x="410" y="525" width="61" height="3" fill="#cfcfca"/><rect x="411" y="529" width="60" height="3" fill="#cfcfca"/><rect x="415" y="537" width="11" height="41" fill="#1d1d1f"/><line x1="420.5" y1="537" x2="420.5" y2="578" stroke="#3a8ff6" stroke-width="0.9"/><rect x="427" y="541" width="21" height="31" fill="#17181a"/><rect x="430" y="544" width="5.319999999999993" height="25" fill="#4f74b4"/><rect x="437.32" y="544" width="9.180000000000007" height="25" fill="#6b9fe8"/><rect x="448" y="537" width="28" height="41" fill="#1d1d1f"/><line x1="452.6666666666667" y1="537" x2="452.6666666666667" y2="578" stroke="#3a8ff6" stroke-width="0.9"/><line x1="457.3333333333333" y1="537" x2="457.3333333333333" y2="578" stroke="#3a8ff6" stroke-width="0.9"/><line x1="462.0" y1="537" x2="462.0" y2="578" stroke="#3d3028" stroke-width="0.9"/><line x1="466.6666666666667" y1="537" x2="466.6666666666667" y2="578" stroke="#3a8ff6" stroke-width="0.9"/><line x1="471.3333333333333" y1="537" x2="471.3333333333333" y2="578" stroke="#3a8ff6" stroke-width="0.9"/><rect x="478" y="541" width="22" height="31" fill="#17181a"/><rect x="481" y="544" width="5.740000000000009" height="25" fill="#4f74b4"/><rect x="488.74" y="544" width="9.759999999999991" height="25" fill="#6b9fe8"/><rect x="409" y="582" width="63" height="9" fill="#161616"/><rect x="410" y="583" width="61" height="3" fill="#cfcfca"/><rect x="411" y="587" width="60" height="3" fill="#cfcfca"/><rect x="415" y="594" width="11" height="42" fill="#1d1d1f"/><line x1="420.5" y1="594" x2="420.5" y2="636" stroke="#3a8ff6" stroke-width="0.9"/><rect x="427" y="598" width="21" height="32" fill="#17181a"/><rect x="430" y="601" width="5.319999999999993" height="26" fill="#4f74b4"/><rect x="437.32" y="601" width="9.180000000000007" height="26" fill="#6b9fe8"/><rect x="448" y="594" width="28" height="42" fill="#1d1d1f"/><line x1="452.6666666666667" y1="594" x2="452.6666666666667" y2="636" stroke="#3a8ff6" stroke-width="0.9"/><line x1="457.3333333333333" y1="594" x2="457.3333333333333" y2="636" stroke="#3a8ff6" stroke-width="0.9"/><line x1="462.0" y1="594" x2="462.0" y2="636" stroke="#3d3028" stroke-width="0.9"/><line x1="466.6666666666667" y1="594" x2="466.6666666666667" y2="636" stroke="#3a8ff6" stroke-width="0.9"/><line x1="471.3333333333333" y1="594" x2="471.3333333333333" y2="636" stroke="#3a8ff6" stroke-width="0.9"/><rect x="478" y="598" width="22" height="32" fill="#17181a"/><rect x="481" y="601" width="5.740000000000009" height="26" fill="#4f74b4"/><rect x="488.74" y="601" width="9.759999999999991" height="26" fill="#6b9fe8"/><rect x="409" y="640" width="63" height="9" fill="#161616"/><rect x="410" y="641" width="61" height="3" fill="#cfcfca"/><rect x="411" y="645" width="60" height="3" fill="#cfcfca"/><rect x="415" y="653" width="11" height="41" fill="#1d1d1f"/><line x1="420.5" y1="653" x2="420.5" y2="694" stroke="#3a8ff6" stroke-width="0.9"/><rect x="427" y="657" width="21" height="31" fill="#17181a"/><rect x="430" y="660" width="5.319999999999993" height="25" fill="#4f74b4"/><rect x="437.32" y="660" width="9.180000000000007" height="25" fill="#6b9fe8"/><rect x="448" y="653" width="28" height="41" fill="#1d1d1f"/><line x1="452.6666666666667" y1="653" x2="452.6666666666667" y2="694" stroke="#3a8ff6" stroke-width="0.9"/><line x1="457.3333333333333" y1="653" x2="457.3333333333333" y2="694" stroke="#3a8ff6" stroke-width="0.9"/><line x1="462.0" y1="653" x2="462.0" y2="694" stroke="#3d3028" stroke-width="0.9"/><line x1="466.6666666666667" y1="653" x2="466.6666666666667" y2="694" stroke="#3a8ff6" stroke-width="0.9"/><line x1="471.3333333333333" y1="653" x2="471.3333333333333" y2="694" stroke="#3a8ff6" stroke-width="0.9"/><rect x="478" y="657" width="22" height="31" fill="#17181a"/><rect x="481" y="660" width="5.740000000000009" height="25" fill="#4f74b4"/><rect x="488.74" y="660" width="9.759999999999991" height="25" fill="#6b9fe8"/><rect x="409" y="698" width="63" height="9" fill="#161616"/><rect x="410" y="699" width="61" height="3" fill="#cfcfca"/><rect x="411" y="703" width="60" height="3" fill="#cfcfca"/><rect x="415" y="712" width="11" height="40" fill="#1d1d1f"/><line x1="420.5" y1="712" x2="420.5" y2="752" stroke="#b8b6b0" stroke-width="0.9"/><rect x="427" y="716" width="21" height="30" fill="#17181a"/><rect x="430" y="719" width="5.319999999999993" height="24" fill="#6c6a66"/><rect x="437.32" y="719" width="9.180000000000007" height="24" fill="#b0aea9"/><rect x="448" y="712" width="28" height="40" fill="#1d1d1f"/><line x1="452.6666666666667" y1="712" x2="452.6666666666667" y2="752" stroke="#b8b6b0" stroke-width="0.9"/><line x1="457.3333333333333" y1="712" x2="457.3333333333333" y2="752" stroke="#b8b6b0" stroke-width="0.9"/><line x1="462.0" y1="712" x2="462.0" y2="752" stroke="#3d3028" stroke-width="0.9"/><line x1="466.6666666666667" y1="712" x2="466.6666666666667" y2="752" stroke="#b8b6b0" stroke-width="0.9"/><line x1="471.3333333333333" y1="712" x2="471.3333333333333" y2="752" stroke="#b8b6b0" stroke-width="0.9"/><rect x="478" y="716" width="22" height="30" fill="#17181a"/><rect x="481" y="719" width="5.740000000000009" height="24" fill="#6c6a66"/><rect x="488.74" y="719" width="9.759999999999991" height="24" fill="#b0aea9"/><rect x="409" y="756" width="63" height="9" fill="#161616"/><rect x="410" y="757" width="61" height="3" fill="#cfcfca"/><rect x="411" y="761" width="60" height="3" fill="#cfcfca"/><rect x="415" y="770" width="11" height="40" fill="#1d1d1f"/><line x1="420.5" y1="770" x2="420.5" y2="810" stroke="#b8b6b0" stroke-width="0.9"/><rect x="427" y="774" width="21" height="30" fill="#17181a"/><rect x="430" y="777" width="5.319999999999993" height="24" fill="#6c6a66"/><rect x="437.32" y="777" width="9.180000000000007" height="24" fill="#b0aea9"/><rect x="448" y="770" width="28" height="40" fill="#1d1d1f"/><line x1="452.6666666666667" y1="770" x2="452.6666666666667" y2="810" stroke="#b8b6b0" stroke-width="0.9"/><line x1="457.3333333333333" y1="770" x2="457.3333333333333" y2="810" stroke="#b8b6b0" stroke-width="0.9"/><line x1="462.0" y1="770" x2="462.0" y2="810" stroke="#3d3028" stroke-width="0.9"/><line x1="466.6666666666667" y1="770" x2="466.6666666666667" y2="810" stroke="#b8b6b0" stroke-width="0.9"/><line x1="471.3333333333333" y1="770" x2="471.3333333333333" y2="810" stroke="#b8b6b0" stroke-width="0.9"/><rect x="478" y="774" width="22" height="30" fill="#17181a"/><rect x="481" y="777" width="5.740000000000009" height="24" fill="#6c6a66"/><rect x="488.74" y="777" width="9.759999999999991" height="24" fill="#b0aea9"/><line x1="406" y1="478" x2="406" y2="822" stroke="#161616" stroke-width="1.6"/><line x1="520" y1="478" x2="520" y2="822" stroke="#161616" stroke-width="1.6"/><rect x="558" y="482" width="97" height="43" fill="#aaaba6"/><line x1="558" y1="482" x2="655" y2="482" stroke="#161616" stroke-width="1.6"/><rect x="558" y="525" width="97" height="15" fill="#6c6c68"/><line x1="558" y1="525" x2="655" y2="525" stroke="#161616" stroke-width="1.6"/><rect x="558" y="540" width="97" height="42" fill="#3a8ff6"/><line x1="558" y1="540" x2="655" y2="540" stroke="#161616" stroke-width="1.6"/><rect x="558" y="582" width="97" height="16" fill="#3a8ff6"/><line x1="558" y1="582" x2="655" y2="582" stroke="#161616" stroke-width="1.6"/><rect x="558" y="598" width="97" height="42" fill="#3a8ff6"/><line x1="558" y1="598" x2="655" y2="598" stroke="#161616" stroke-width="1.6"/><rect x="558" y="640" width="97" height="16" fill="#3a8ff6"/><line x1="558" y1="640" x2="655" y2="640" stroke="#161616" stroke-width="1.6"/><rect x="558" y="656" width="97" height="42" fill="#3a8ff6"/><line x1="558" y1="656" x2="655" y2="656" stroke="#161616" stroke-width="1.6"/><rect x="558" y="698" width="97" height="17" fill="#6c6c68"/><line x1="558" y1="698" x2="655" y2="698" stroke="#161616" stroke-width="1.6"/><rect x="558" y="715" width="97" height="42" fill="#aaaba6"/><line x1="558" y1="715" x2="655" y2="715" stroke="#161616" stroke-width="1.6"/><rect x="558" y="757" width="97" height="17" fill="#6c6c68"/><line x1="558" y1="757" x2="655" y2="757" stroke="#161616" stroke-width="1.6"/><rect x="558" y="774" width="97" height="41" fill="#aaaba6"/><line x1="558" y1="774" x2="655" y2="774" stroke="#161616" stroke-width="1.6"/><rect x="558" y="815" width="97" height="13" fill="#6c6c68"/><line x1="558" y1="815" x2="655" y2="815" stroke="#161616" stroke-width="1.6"/><rect x="577" y="486" width="22" height="33" fill="#17181a"/><rect x="580" y="489" width="5.740000000000009" height="27" fill="#6c6a66"/><rect x="587.74" y="489" width="9.759999999999991" height="27" fill="#b0aea9"/><rect x="600" y="482" width="27" height="43" fill="#1d1d1f"/><line x1="604.5" y1="482" x2="604.5" y2="525" stroke="#b8b6b0" stroke-width="0.9"/><line x1="609.0" y1="482" x2="609.0" y2="525" stroke="#b8b6b0" stroke-width="0.9"/><line x1="613.5" y1="482" x2="613.5" y2="525" stroke="#3d3028" stroke-width="0.9"/><line x1="618.0" y1="482" x2="618.0" y2="525" stroke="#b8b6b0" stroke-width="0.9"/><line x1="622.5" y1="482" x2="622.5" y2="525" stroke="#b8b6b0" stroke-width="0.9"/><rect x="630" y="486" width="22" height="33" fill="#17181a"/><rect x="633" y="489" width="5.740000000000009" height="27" fill="#6c6a66"/><rect x="640.74" y="489" width="9.759999999999991" height="27" fill="#b0aea9"/><rect x="600" y="529" width="55" height="9" fill="#161616"/><rect x="601" y="530" width="53" height="3" fill="#cfcfca"/><rect x="602" y="534" width="52" height="3" fill="#cfcfca"/><rect x="577" y="544" width="22" height="32" fill="#17181a"/><rect x="580" y="547" width="5.740000000000009" height="26" fill="#4f74b4"/><rect x="587.74" y="547" width="9.759999999999991" height="26" fill="#6b9fe8"/><rect x="600" y="540" width="27" height="42" fill="#1d1d1f"/><line x1="604.5" y1="540" x2="604.5" y2="582" stroke="#3a8ff6" stroke-width="0.9"/><line x1="609.0" y1="540" x2="609.0" y2="582" stroke="#3a8ff6" stroke-width="0.9"/><line x1="613.5" y1="540" x2="613.5" y2="582" stroke="#3d3028" stroke-width="0.9"/><line x1="618.0" y1="540" x2="618.0" y2="582" stroke="#3a8ff6" stroke-width="0.9"/><line x1="622.5" y1="540" x2="622.5" y2="582" stroke="#3a8ff6" stroke-width="0.9"/><rect x="630" y="544" width="22" height="32" fill="#17181a"/><rect x="633" y="547" width="5.740000000000009" height="26" fill="#4f74b4"/><rect x="640.74" y="547" width="9.759999999999991" height="26" fill="#6b9fe8"/><rect x="600" y="586" width="55" height="9" fill="#161616"/><rect x="601" y="587" width="53" height="3" fill="#cfcfca"/><rect x="602" y="591" width="52" height="3" fill="#cfcfca"/><rect x="577" y="602" width="22" height="32" fill="#17181a"/><rect x="580" y="605" width="5.740000000000009" height="26" fill="#4f74b4"/><rect x="587.74" y="605" width="9.759999999999991" height="26" fill="#6b9fe8"/><rect x="600" y="598" width="27" height="42" fill="#1d1d1f"/><line x1="604.5" y1="598" x2="604.5" y2="640" stroke="#3a8ff6" stroke-width="0.9"/><line x1="609.0" y1="598" x2="609.0" y2="640" stroke="#3a8ff6" stroke-width="0.9"/><line x1="613.5" y1="598" x2="613.5" y2="640" stroke="#3d3028" stroke-width="0.9"/><line x1="618.0" y1="598" x2="618.0" y2="640" stroke="#3a8ff6" stroke-width="0.9"/><line x1="622.5" y1="598" x2="622.5" y2="640" stroke="#3a8ff6" stroke-width="0.9"/><rect x="630" y="602" width="22" height="32" fill="#17181a"/><rect x="633" y="605" width="5.740000000000009" height="26" fill="#4f74b4"/><rect x="640.74" y="605" width="9.759999999999991" height="26" fill="#6b9fe8"/><rect x="600" y="644" width="55" height="9" fill="#161616"/><rect x="601" y="645" width="53" height="3" fill="#cfcfca"/><rect x="602" y="649" width="52" height="3" fill="#cfcfca"/><rect x="577" y="660" width="22" height="32" fill="#17181a"/><rect x="580" y="663" width="5.740000000000009" height="26" fill="#4f74b4"/><rect x="587.74" y="663" width="9.759999999999991" height="26" fill="#6b9fe8"/><rect x="600" y="656" width="27" height="42" fill="#1d1d1f"/><line x1="604.5" y1="656" x2="604.5" y2="698" stroke="#3a8ff6" stroke-width="0.9"/><line x1="609.0" y1="656" x2="609.0" y2="698" stroke="#3a8ff6" stroke-width="0.9"/><line x1="613.5" y1="656" x2="613.5" y2="698" stroke="#3d3028" stroke-width="0.9"/><line x1="618.0" y1="656" x2="618.0" y2="698" stroke="#3a8ff6" stroke-width="0.9"/><line x1="622.5" y1="656" x2="622.5" y2="698" stroke="#3a8ff6" stroke-width="0.9"/><rect x="630" y="660" width="22" height="32" fill="#17181a"/><rect x="633" y="663" width="5.740000000000009" height="26" fill="#4f74b4"/><rect x="640.74" y="663" width="9.759999999999991" height="26" fill="#6b9fe8"/><rect x="600" y="702" width="55" height="9" fill="#161616"/><rect x="601" y="703" width="53" height="3" fill="#cfcfca"/><rect x="602" y="707" width="52" height="3" fill="#cfcfca"/><rect x="577" y="719" width="22" height="32" fill="#17181a"/><rect x="580" y="722" width="5.740000000000009" height="26" fill="#6c6a66"/><rect x="587.74" y="722" width="9.759999999999991" height="26" fill="#b0aea9"/><rect x="600" y="715" width="27" height="42" fill="#1d1d1f"/><line x1="604.5" y1="715" x2="604.5" y2="757" stroke="#b8b6b0" stroke-width="0.9"/><line x1="609.0" y1="715" x2="609.0" y2="757" stroke="#b8b6b0" stroke-width="0.9"/><line x1="613.5" y1="715" x2="613.5" y2="757" stroke="#3d3028" stroke-width="0.9"/><line x1="618.0" y1="715" x2="618.0" y2="757" stroke="#b8b6b0" stroke-width="0.9"/><line x1="622.5" y1="715" x2="622.5" y2="757" stroke="#b8b6b0" stroke-width="0.9"/><rect x="630" y="719" width="22" height="32" fill="#17181a"/><rect x="633" y="722" width="5.740000000000009" height="26" fill="#6c6a66"/><rect x="640.74" y="722" width="9.759999999999991" height="26" fill="#b0aea9"/><rect x="600" y="761" width="55" height="9" fill="#161616"/><rect x="601" y="762" width="53" height="3" fill="#cfcfca"/><rect x="602" y="766" width="52" height="3" fill="#cfcfca"/><rect x="577" y="778" width="22" height="31" fill="#17181a"/><rect x="580" y="781" width="5.740000000000009" height="25" fill="#6c6a66"/><rect x="587.74" y="781" width="9.759999999999991" height="25" fill="#b0aea9"/><rect x="600" y="774" width="27" height="41" fill="#1d1d1f"/><line x1="604.5" y1="774" x2="604.5" y2="815" stroke="#b8b6b0" stroke-width="0.9"/><line x1="609.0" y1="774" x2="609.0" y2="815" stroke="#b8b6b0" stroke-width="0.9"/><line x1="613.5" y1="774" x2="613.5" y2="815" stroke="#3d3028" stroke-width="0.9"/><line x1="618.0" y1="774" x2="618.0" y2="815" stroke="#b8b6b0" stroke-width="0.9"/><line x1="622.5" y1="774" x2="622.5" y2="815" stroke="#b8b6b0" stroke-width="0.9"/><rect x="630" y="778" width="22" height="31" fill="#17181a"/><rect x="633" y="781" width="5.740000000000009" height="25" fill="#6c6a66"/><rect x="640.74" y="781" width="9.759999999999991" height="25" fill="#b0aea9"/><line x1="558" y1="482" x2="558" y2="828" stroke="#161616" stroke-width="1.6"/><line x1="655" y1="482" x2="655" y2="828" stroke="#161616" stroke-width="1.6"/><rect x="655" y="452" width="58" height="78" fill="#aaaba6"/><line x1="655" y1="452" x2="713" y2="452" stroke="#161616" stroke-width="0.9"/><rect x="655" y="530" width="58" height="17" fill="#6c6c68"/><line x1="655" y1="530" x2="713" y2="530" stroke="#161616" stroke-width="0.9"/><rect x="655" y="547" width="58" height="153" fill="#3a8ff6"/><line x1="655" y1="547" x2="713" y2="547" stroke="#161616" stroke-width="0.9"/><rect x="655" y="700" width="58" height="17" fill="#6c6c68"/><line x1="655" y1="700" x2="713" y2="700" stroke="#161616" stroke-width="0.9"/><rect x="655" y="717" width="58" height="43" fill="#aaaba6"/><line x1="655" y1="717" x2="713" y2="717" stroke="#161616" stroke-width="0.9"/><line x1="655" y1="583" x2="713" y2="585" stroke="#161616" stroke-width="0.9"/><line x1="655" y1="640" x2="713" y2="642" stroke="#161616" stroke-width="0.9"/><line x1="655" y1="697" x2="713" y2="699" stroke="#161616" stroke-width="0.9"/><rect x="674" y="460" width="20" height="29" fill="#17181a"/><rect x="677" y="463" width="4.899999999999977" height="23" fill="#6c6a66"/><rect x="683.9" y="463" width="8.600000000000023" height="23" fill="#b0aea9"/><rect x="684" y="474" width="9" height="12" fill="#c5c5c5"/><rect x="674" y="518" width="20" height="29" fill="#17181a"/><rect x="677" y="521" width="4.899999999999977" height="23" fill="#6c6a66"/><rect x="683.9" y="521" width="8.600000000000023" height="23" fill="#b0aea9"/><rect x="684" y="532" width="9" height="12" fill="#c5c5c5"/><rect x="674" y="576" width="20" height="29" fill="#17181a"/><rect x="677" y="579" width="4.899999999999977" height="23" fill="#4f74b4"/><rect x="683.9" y="579" width="8.600000000000023" height="23" fill="#6b9fe8"/><rect x="684" y="590" width="9" height="12" fill="#c5c5c5"/><rect x="674" y="634" width="20" height="29" fill="#17181a"/><rect x="677" y="637" width="4.899999999999977" height="23" fill="#4f74b4"/><rect x="683.9" y="637" width="8.600000000000023" height="23" fill="#6b9fe8"/><rect x="684" y="648" width="9" height="12" fill="#c5c5c5"/><rect x="674" y="692" width="20" height="29" fill="#17181a"/><rect x="677" y="695" width="4.899999999999977" height="23" fill="#6c6a66"/><rect x="683.9" y="695" width="8.600000000000023" height="23" fill="#b0aea9"/><rect x="684" y="706" width="9" height="12" fill="#c5c5c5"/><line x1="655" y1="436" x2="655" y2="760" stroke="#161616" stroke-width="1"/><line x1="713" y1="436" x2="713" y2="760" stroke="#161616" stroke-width="1"/><rect x="713" y="487" width="115" height="40" fill="#aaaba6"/><line x1="713" y1="487" x2="828" y2="487" stroke="#161616" stroke-width="1.6"/><rect x="713" y="527" width="115" height="20" fill="#6c6c68"/><line x1="713" y1="527" x2="828" y2="527" stroke="#161616" stroke-width="1.6"/><rect x="713" y="547" width="115" height="41" fill="#3a8ff6"/><line x1="713" y1="547" x2="828" y2="547" stroke="#161616" stroke-width="1.6"/><rect x="713" y="588" width="115" height="16" fill="#3a8ff6"/><line x1="713" y1="588" x2="828" y2="588" stroke="#161616" stroke-width="1.6"/><rect x="713" y="604" width="115" height="42" fill="#3a8ff6"/><line x1="713" y1="604" x2="828" y2="604" stroke="#161616" stroke-width="1.6"/><rect x="713" y="646" width="115" height="16" fill="#3a8ff6"/><line x1="713" y1="646" x2="828" y2="646" stroke="#161616" stroke-width="1.6"/><rect x="713" y="662" width="115" height="44" fill="#3a8ff6"/><line x1="713" y1="662" x2="828" y2="662" stroke="#161616" stroke-width="1.6"/><rect x="713" y="706" width="115" height="16" fill="#6c6c68"/><line x1="713" y1="706" x2="828" y2="706" stroke="#161616" stroke-width="1.6"/><rect x="713" y="722" width="115" height="40" fill="#aaaba6"/><line x1="713" y1="722" x2="828" y2="722" stroke="#161616" stroke-width="1.6"/><rect x="713" y="762" width="115" height="16" fill="#6c6c68"/><line x1="713" y1="762" x2="828" y2="762" stroke="#161616" stroke-width="1.6"/><rect x="713" y="778" width="115" height="40" fill="#aaaba6"/><line x1="713" y1="778" x2="828" y2="778" stroke="#161616" stroke-width="1.6"/><rect x="713" y="818" width="115" height="15" fill="#6c6c68"/><line x1="713" y1="818" x2="828" y2="818" stroke="#161616" stroke-width="1.6"/><rect x="722" y="487" width="11" height="40" fill="#1d1d1f"/><line x1="727.5" y1="487" x2="727.5" y2="527" stroke="#b8b6b0" stroke-width="0.9"/><rect x="734" y="491" width="21" height="30" fill="#17181a"/><rect x="737" y="494" width="5.32000000000005" height="24" fill="#6c6a66"/><rect x="744.32" y="494" width="9.17999999999995" height="24" fill="#b0aea9"/><rect x="756" y="487" width="28" height="40" fill="#1d1d1f"/><line x1="760.6666666666666" y1="487" x2="760.6666666666666" y2="527" stroke="#b8b6b0" stroke-width="0.9"/><line x1="765.3333333333334" y1="487" x2="765.3333333333334" y2="527" stroke="#b8b6b0" stroke-width="0.9"/><line x1="770.0" y1="487" x2="770.0" y2="527" stroke="#3d3028" stroke-width="0.9"/><line x1="774.6666666666666" y1="487" x2="774.6666666666666" y2="527" stroke="#b8b6b0" stroke-width="0.9"/><line x1="779.3333333333334" y1="487" x2="779.3333333333334" y2="527" stroke="#b8b6b0" stroke-width="0.9"/><rect x="785" y="491" width="22" height="30" fill="#17181a"/><rect x="788" y="494" width="5.740000000000009" height="24" fill="#6c6a66"/><rect x="795.74" y="494" width="9.759999999999991" height="24" fill="#b0aea9"/><rect x="716" y="531" width="70" height="9" fill="#161616"/><rect x="717" y="532" width="68" height="3" fill="#cfcfca"/><rect x="718" y="536" width="67" height="3" fill="#cfcfca"/><rect x="722" y="547" width="11" height="41" fill="#1d1d1f"/><line x1="727.5" y1="547" x2="727.5" y2="588" stroke="#3a8ff6" stroke-width="0.9"/><rect x="734" y="551" width="21" height="31" fill="#17181a"/><rect x="737" y="554" width="5.32000000000005" height="25" fill="#4f74b4"/><rect x="744.32" y="554" width="9.17999999999995" height="25" fill="#6b9fe8"/><rect x="756" y="547" width="28" height="41" fill="#1d1d1f"/><line x1="760.6666666666666" y1="547" x2="760.6666666666666" y2="588" stroke="#3a8ff6" stroke-width="0.9"/><line x1="765.3333333333334" y1="547" x2="765.3333333333334" y2="588" stroke="#3a8ff6" stroke-width="0.9"/><line x1="770.0" y1="547" x2="770.0" y2="588" stroke="#3d3028" stroke-width="0.9"/><line x1="774.6666666666666" y1="547" x2="774.6666666666666" y2="588" stroke="#3a8ff6" stroke-width="0.9"/><line x1="779.3333333333334" y1="547" x2="779.3333333333334" y2="588" stroke="#3a8ff6" stroke-width="0.9"/><rect x="785" y="551" width="22" height="31" fill="#17181a"/><rect x="788" y="554" width="5.740000000000009" height="25" fill="#4f74b4"/><rect x="795.74" y="554" width="9.759999999999991" height="25" fill="#6b9fe8"/><rect x="716" y="592" width="70" height="9" fill="#161616"/><rect x="717" y="593" width="68" height="3" fill="#cfcfca"/><rect x="718" y="597" width="67" height="3" fill="#cfcfca"/><rect x="722" y="604" width="11" height="42" fill="#1d1d1f"/><line x1="727.5" y1="604" x2="727.5" y2="646" stroke="#3a8ff6" stroke-width="0.9"/><rect x="734" y="608" width="21" height="32" fill="#17181a"/><rect x="737" y="611" width="5.32000000000005" height="26" fill="#4f74b4"/><rect x="744.32" y="611" width="9.17999999999995" height="26" fill="#6b9fe8"/><rect x="756" y="604" width="28" height="42" fill="#1d1d1f"/><line x1="760.6666666666666" y1="604" x2="760.6666666666666" y2="646" stroke="#3a8ff6" stroke-width="0.9"/><line x1="765.3333333333334" y1="604" x2="765.3333333333334" y2="646" stroke="#3a8ff6" stroke-width="0.9"/><line x1="770.0" y1="604" x2="770.0" y2="646" stroke="#3d3028" stroke-width="0.9"/><line x1="774.6666666666666" y1="604" x2="774.6666666666666" y2="646" stroke="#3a8ff6" stroke-width="0.9"/><line x1="779.3333333333334" y1="604" x2="779.3333333333334" y2="646" stroke="#3a8ff6" stroke-width="0.9"/><rect x="785" y="608" width="22" height="32" fill="#17181a"/><rect x="788" y="611" width="5.740000000000009" height="26" fill="#4f74b4"/><rect x="795.74" y="611" width="9.759999999999991" height="26" fill="#6b9fe8"/><rect x="716" y="650" width="70" height="9" fill="#161616"/><rect x="717" y="651" width="68" height="3" fill="#cfcfca"/><rect x="718" y="655" width="67" height="3" fill="#cfcfca"/><rect x="722" y="662" width="11" height="44" fill="#1d1d1f"/><line x1="727.5" y1="662" x2="727.5" y2="706" stroke="#3a8ff6" stroke-width="0.9"/><rect x="734" y="666" width="21" height="34" fill="#17181a"/><rect x="737" y="669" width="5.32000000000005" height="28" fill="#4f74b4"/><rect x="744.32" y="669" width="9.17999999999995" height="28" fill="#6b9fe8"/><rect x="756" y="662" width="28" height="44" fill="#1d1d1f"/><line x1="760.6666666666666" y1="662" x2="760.6666666666666" y2="706" stroke="#3a8ff6" stroke-width="0.9"/><line x1="765.3333333333334" y1="662" x2="765.3333333333334" y2="706" stroke="#3a8ff6" stroke-width="0.9"/><line x1="770.0" y1="662" x2="770.0" y2="706" stroke="#3d3028" stroke-width="0.9"/><line x1="774.6666666666666" y1="662" x2="774.6666666666666" y2="706" stroke="#3a8ff6" stroke-width="0.9"/><line x1="779.3333333333334" y1="662" x2="779.3333333333334" y2="706" stroke="#3a8ff6" stroke-width="0.9"/><rect x="785" y="666" width="22" height="34" fill="#17181a"/><rect x="788" y="669" width="5.740000000000009" height="28" fill="#4f74b4"/><rect x="795.74" y="669" width="9.759999999999991" height="28" fill="#6b9fe8"/><rect x="716" y="710" width="70" height="9" fill="#161616"/><rect x="717" y="711" width="68" height="3" fill="#cfcfca"/><rect x="718" y="715" width="67" height="3" fill="#cfcfca"/><rect x="722" y="722" width="11" height="40" fill="#1d1d1f"/><line x1="727.5" y1="722" x2="727.5" y2="762" stroke="#b8b6b0" stroke-width="0.9"/><rect x="734" y="726" width="21" height="30" fill="#17181a"/><rect x="737" y="729" width="5.32000000000005" height="24" fill="#6c6a66"/><rect x="744.32" y="729" width="9.17999999999995" height="24" fill="#b0aea9"/><rect x="756" y="722" width="28" height="40" fill="#1d1d1f"/><line x1="760.6666666666666" y1="722" x2="760.6666666666666" y2="762" stroke="#b8b6b0" stroke-width="0.9"/><line x1="765.3333333333334" y1="722" x2="765.3333333333334" y2="762" stroke="#b8b6b0" stroke-width="0.9"/><line x1="770.0" y1="722" x2="770.0" y2="762" stroke="#3d3028" stroke-width="0.9"/><line x1="774.6666666666666" y1="722" x2="774.6666666666666" y2="762" stroke="#b8b6b0" stroke-width="0.9"/><line x1="779.3333333333334" y1="722" x2="779.3333333333334" y2="762" stroke="#b8b6b0" stroke-width="0.9"/><rect x="785" y="726" width="22" height="30" fill="#17181a"/><rect x="788" y="729" width="5.740000000000009" height="24" fill="#6c6a66"/><rect x="795.74" y="729" width="9.759999999999991" height="24" fill="#b0aea9"/><rect x="716" y="766" width="70" height="9" fill="#161616"/><rect x="717" y="767" width="68" height="3" fill="#cfcfca"/><rect x="718" y="771" width="67" height="3" fill="#cfcfca"/><rect x="722" y="778" width="11" height="40" fill="#1d1d1f"/><line x1="727.5" y1="778" x2="727.5" y2="818" stroke="#b8b6b0" stroke-width="0.9"/><rect x="734" y="782" width="21" height="30" fill="#17181a"/><rect x="737" y="785" width="5.32000000000005" height="24" fill="#6c6a66"/><rect x="744.32" y="785" width="9.17999999999995" height="24" fill="#b0aea9"/><rect x="756" y="778" width="28" height="40" fill="#1d1d1f"/><line x1="760.6666666666666" y1="778" x2="760.6666666666666" y2="818" stroke="#b8b6b0" stroke-width="0.9"/><line x1="765.3333333333334" y1="778" x2="765.3333333333334" y2="818" stroke="#b8b6b0" stroke-width="0.9"/><line x1="770.0" y1="778" x2="770.0" y2="818" stroke="#3d3028" stroke-width="0.9"/><line x1="774.6666666666666" y1="778" x2="774.6666666666666" y2="818" stroke="#b8b6b0" stroke-width="0.9"/><line x1="779.3333333333334" y1="778" x2="779.3333333333334" y2="818" stroke="#b8b6b0" stroke-width="0.9"/><rect x="785" y="782" width="22" height="30" fill="#17181a"/><rect x="788" y="785" width="5.740000000000009" height="24" fill="#6c6a66"/><rect x="795.74" y="785" width="9.759999999999991" height="24" fill="#b0aea9"/><line x1="713" y1="487" x2="713" y2="833" stroke="#161616" stroke-width="1.6"/><line x1="828" y1="487" x2="828" y2="833" stroke="#161616" stroke-width="1.6"/><polygon points="282,738 290,731 435,728 437,734 403,745 282,745" fill="#161616"/><rect x="284" y="737" width="117" height="2" fill="#5e5650"/><rect x="286" y="741" width="115" height="2" fill="#6e655f"/><rect x="286" y="744" width="111" height="81" fill="#7a716b" stroke="#161616" stroke-width="1"/><polygon points="397,744 427,736 427,819 397,825" fill="#3b332e" stroke="#161616" stroke-width="1"/><line x1="405" y1="750" x2="405" y2="823" stroke="#5a514b" stroke-width="1"/><line x1="419" y1="744" x2="419" y2="820" stroke="#5a514b" stroke-width="1"/><line x1="301" y1="744" x2="301" y2="825" stroke="#161616" stroke-width="1.2"/><line x1="382" y1="744" x2="382" y2="825" stroke="#161616" stroke-width="1.2"/><rect x="302" y="756" width="79" height="67" fill="#6e655f" stroke="#161616" stroke-width="1"/><polygon points="307,760 376,760 370,766 313,766" fill="#5e5650"/><rect x="315" y="766" width="53" height="57" fill="#2a2624" stroke="#161616" stroke-width="1"/><rect x="317" y="768" width="57" height="55" fill="#7a7774"/><rect x="319" y="770" width="11.25" height="51" fill="#b3b1ac"/><rect x="333.25" y="770" width="11.25" height="51" fill="#a9a7a2"/><rect x="346.5" y="770" width="12.25" height="51" fill="#6f6c69"/><rect x="334.25" y="818.0" width="38.75" height="3" fill="#cfcfcb"/><rect x="337.5" y="811.8" width="35.5" height="3" fill="#cfcfcb"/><rect x="342.0" y="805.6" width="31.0" height="3" fill="#cfcfcb"/><rect x="346.5" y="799.4" width="26.5" height="3" fill="#cfcfcb"/><rect x="351.0" y="793.2" width="22.0" height="3" fill="#cfcfcb"/><rect x="355.5" y="787.0" width="17.5" height="3" fill="#cfcfcb"/><rect x="360.0" y="780.8" width="13.0" height="3" fill="#cfcfcb"/><rect x="364.5" y="774.6" width="8.5" height="3" fill="#cfcfcb"/><rect x="369.0" y="768.4" width="4.0" height="3" fill="#cfcfcb"/><line x1="331.25" y1="768" x2="331.25" y2="823" stroke="#161616" stroke-width="1.4"/><line x1="345.5" y1="768" x2="345.5" y2="823" stroke="#161616" stroke-width="1.4"/><line x1="359.75" y1="768" x2="359.75" y2="823" stroke="#161616" stroke-width="1.4"/><rect x="292" y="823" width="107" height="6" fill="#2a2624"/><rect x="294" y="824" width="101" height="3" fill="#6e655f"/><polygon points="589,746 597,739 742,736 744,742 712,753 589,753" fill="#161616"/><rect x="591" y="745" width="119" height="2" fill="#5e5650"/><rect x="593" y="749" width="117" height="2" fill="#6e655f"/><rect x="593" y="752" width="113" height="84" fill="#7a716b" stroke="#161616" stroke-width="1"/><polygon points="706,752 734,744 734,830 706,836" fill="#3b332e" stroke="#161616" stroke-width="1"/><line x1="714" y1="758" x2="714" y2="834" stroke="#5a514b" stroke-width="1"/><line x1="726" y1="752" x2="726" y2="831" stroke="#5a514b" stroke-width="1"/><line x1="608" y1="752" x2="608" y2="836" stroke="#161616" stroke-width="1.2"/><line x1="691" y1="752" x2="691" y2="836" stroke="#161616" stroke-width="1.2"/><rect x="609" y="764" width="81" height="70" fill="#6e655f" stroke="#161616" stroke-width="1"/><polygon points="614,768 685,768 679,774 620,774" fill="#5e5650"/><rect x="622" y="774" width="55" height="60" fill="#2a2624" stroke="#161616" stroke-width="1"/><rect x="624" y="776" width="59" height="58" fill="#7a7774"/><rect x="626" y="778" width="11.75" height="54" fill="#b3b1ac"/><rect x="640.75" y="778" width="11.75" height="54" fill="#a9a7a2"/><rect x="654.5" y="778" width="12.75" height="54" fill="#6f6c69"/><rect x="642.0" y="829.0" width="40.0" height="3" fill="#cfcfcb"/><rect x="646.5" y="822.8" width="35.5" height="3" fill="#cfcfcb"/><rect x="651.0" y="816.6" width="31.0" height="3" fill="#cfcfcb"/><rect x="655.5" y="810.4" width="26.5" height="3" fill="#cfcfcb"/><rect x="660.0" y="804.2" width="22.0" height="3" fill="#cfcfcb"/><rect x="664.5" y="798.0" width="17.5" height="3" fill="#cfcfcb"/><rect x="669.0" y="791.8" width="13.0" height="3" fill="#cfcfcb"/><rect x="673.5" y="785.6" width="8.5" height="3" fill="#cfcfcb"/><rect x="678.0" y="779.4" width="4.0" height="3" fill="#cfcfcb"/><line x1="638.75" y1="776" x2="638.75" y2="834" stroke="#161616" stroke-width="1.4"/><line x1="653.5" y1="776" x2="653.5" y2="834" stroke="#161616" stroke-width="1.4"/><line x1="668.25" y1="776" x2="668.25" y2="834" stroke="#161616" stroke-width="1.4"/><rect x="599" y="834" width="109" height="6" fill="#2a2624"/><rect x="601" y="835" width="103" height="3" fill="#6e655f"/></svg><svg style="left:860px;top:230px" width="90" height="75" viewBox="860 230 90 75">
<polygon points="873,252 928,253 928,300 873,296" fill="#d2d2d2" stroke="#777" stroke-width="0.8"/>
<polygon points="928,253 942,248 941,292 928,300" fill="#c9c9c9" stroke="#777" stroke-width="0.8"/>
<polygon points="867,250 886,236 927,236 945,249 928,253" fill="#a3a8b0" stroke="#777" stroke-width="0.8"/>
<line x1="921" y1="236" x2="928" y2="253" stroke="#777" stroke-width="0.8"/>
<rect x="933" y="266" width="3.5" height="9" fill="#a3a8b0"/>
</svg>
<div class="a" style="left:202px;top:575px;width:17px;height:32px;background:#c8ced6;border-radius:0 16px 16px 0"></div>
<svg style="left:205px;top:585px" width="10" height="12"><path d="M7 2 L3 6 L7 10" stroke="#fff" stroke-width="1.6" fill="none"/></svg>
<svg style="left:205px;top:955px" width="60" height="65" viewBox="205 955 60 65">
<path d="M249.5 963.5 H256 L249.5 974 H256" stroke="#1414f0" stroke-width="1.6" fill="none"/>
<path d="M252 1003 V985" stroke="#1212ee" stroke-width="4"/><path d="M247 987 L252 976 L257 987 Z" fill="#1212ee"/>
<path d="M214.5 998.5 L222.5 1010 M222 998.5 L214.5 1010" stroke="#ff1010" stroke-width="1.3"/>
<path d="M225 1004 L235 999 L242 1003 L235 1010 Z" fill="#c00000"/>
<rect x="249" y="1001" width="7" height="9" fill="#9a9a9a"/><rect x="250" y="1002" width="3" height="6" fill="#d0d0d0"/>
<circle cx="245.5" cy="1006" r="5" fill="#10d010"/><circle cx="250" cy="1005.5" r="2.5" fill="#10d010"/>
<path d="M234.5 1002 L238.5 1008 L241 1003 M238.5 1008 V1014" stroke="#30e030" stroke-width="1" fill="none"/>
</svg>
<div class="a" style="left:1018px;top:164px;width:338px;height:194px;background:#eceff2;border:1px solid #d5dae3"></div>
<div class="a" style="left:1018px;top:362px;width:338px;height:96px;background:#eceff2;border:1px solid #d5dae3"></div>
<div class="a" style="left:1018px;top:462px;width:338px;height:589px;background:#eceff2;border:1px solid #d5dae3"></div>
<div class="t" style="left:1027px;top:171px;color:#5a6470;font-size:12px">通用工具</div>
<div class="t" style="left:1027px;top:368px;color:#5a6470;font-size:12px">编辑建筑墙</div>
<div class="t" style="left:1027px;top:469px;color:#5a6470;font-size:12px">属性面板</div>
<svg style="left:0;top:0" width="1359" height="1080"><g transform="translate(1042.5,216)"><path d="M10 0.5 V19.5 M0.5 10 H19.5" stroke="#2f4559" stroke-width="1.3"/><path d="M7.5 3 L10 0.5 L12.5 3 M7.5 17 L10 19.5 L12.5 17 M3 7.5 L0.5 10 L3 12.5 M17 7.5 L19.5 10 L17 12.5" stroke="#2f4559" stroke-width="1.3" fill="none"/><circle cx="10" cy="10" r="1.3" fill="#d3dde6" stroke="#2f4559" stroke-width="1"/></g><g transform="translate(1080.5,216)"><rect x="3.5" y="4" width="16" height="16" rx="1" fill="#7f93a6" stroke="#2f4559" stroke-width="1.2"/><rect x="0.5" y="0.5" width="16" height="16" rx="1" fill="#fff" stroke="#2f4559" stroke-width="1.3"/><path d="M8.5 5 V12 M5 8.5 H12" stroke="#2f4559" stroke-width="1.2"/></g><g transform="translate(1118.5,216)"><path d="M16.5 15 A9 9 0 1 1 17.5 6.5" stroke="#2f4559" stroke-width="1.2" fill="none" transform="rotate(15 10 10)"/><path d="M15.5 9.5 L19 12.5 L21 8.5" stroke="#2f4559" stroke-width="1.2" fill="none"/><path d="M10 7 L13 10 L10 13 L7 10 Z" fill="#7f93a6" stroke="#2f4559" stroke-width="0.8"/></g><g transform="translate(1156.5,216)"><path d="M0.5 8 H11 V19 H7.5 V11.5 H0.5 Z" fill="#7f93a6" stroke="#2f4559" stroke-width="1.1"/><path d="M7.5 0.5 V6.5 M10 0.5 V6.5 M12.5 8 H19 M12.5 10.5 H19" stroke="#7f93a6" stroke-width="1"/></g><g transform="translate(1194.5,216)"><rect x="0.5" y="8" width="8" height="4" fill="#7f93a6" stroke="#2f4559" stroke-width="0.8"/><rect x="11.5" y="8" width="8" height="4" fill="#7f93a6" stroke="#2f4559" stroke-width="0.8"/><path d="M10 0 V20" stroke="#7f93a6" stroke-width="1.1"/></g><g transform="translate(1232.5,216)"><rect x="0.5" y="8" width="6.5" height="4" fill="#7f93a6" stroke="#2f4559" stroke-width="0.8"/><rect x="13" y="8" width="6.5" height="4" fill="#7f93a6" stroke="#2f4559" stroke-width="0.8"/><rect x="8" y="0.5" width="4" height="19" rx="1" fill="#d3dde6" stroke="#2f4559" stroke-width="1.1"/></g><g transform="translate(1270.5,216)"><path d="M1 1 H10 V7 H18 V18 H7 V12 H1 Z" fill="#fff" stroke="#7f93a6" stroke-width="3" stroke-linejoin="round"/><path d="M1 1 H10 V7 H18 V18 H7 V12 H1 Z" fill="#fff" stroke="#2f4559" stroke-width="1.2"/></g><g transform="translate(1042.5,254.5)"><rect x="5.5" y="2.5" width="10" height="5" rx="0.8" fill="#7f93a6" stroke="#2f4559" stroke-width="1.1"/><rect x="0.5" y="11.5" width="15" height="5" rx="0.8" fill="#d3dde6" stroke="#2f4559" stroke-width="1.1"/><path d="M19 0 V20" stroke="#2f4559" stroke-width="1.3"/></g><g transform="translate(1080.5,254.5)"><rect x="0.5" y="7.5" width="10" height="5" rx="0.8" fill="#7f93a6" stroke="#2f4559" stroke-width="1.1"/><path d="M12 8 H17 M12 12 H17" stroke="#7f93a6" stroke-width="1"/><path d="M19 0 V20" stroke="#2f4559" stroke-width="1.3"/></g><g transform="translate(1118.5,254.5)"><rect x="0.5" y="7.5" width="10" height="5" rx="0.8" fill="#a8bccd" stroke="#2f4559" stroke-width="1.1"/><path d="M12.5 0 V20" stroke="#2f4559" stroke-width="1.3"/><path d="M14 8 H19.5 M14 12 H19.5" stroke="#a8bccd" stroke-width="1"/></g><g transform="translate(1156.5,254.5)"><rect x="0.5" y="13.5" width="6" height="6" rx="0.8" fill="#7f93a6" stroke="#2f4559" stroke-width="1.1"/><rect x="7" y="7" width="6" height="6" rx="0.8" fill="#d3dde6" stroke="#2f4559" stroke-width="1.1"/><rect x="13.5" y="0.5" width="6" height="6" rx="0.8" fill="#d3dde6" stroke="#2f4559" stroke-width="1.1"/></g><g transform="translate(1194.5,254.5)"><rect x="7.5" y="0.5" width="5" height="5" rx="0.6" fill="#d3dde6" stroke="#2f4559" stroke-width="1"/><rect x="0.5" y="4" width="5" height="5" rx="0.6" fill="#d3dde6" stroke="#2f4559" stroke-width="1"/><rect x="14.5" y="4" width="5" height="5" rx="0.6" fill="#d3dde6" stroke="#2f4559" stroke-width="1"/><rect x="0.5" y="11" width="5" height="5" rx="0.6" fill="#d3dde6" stroke="#2f4559" stroke-width="1"/><rect x="14.5" y="11" width="5" height="5" rx="0.6" fill="#d3dde6" stroke="#2f4559" stroke-width="1"/><rect x="7.5" y="14.5" width="5" height="5" rx="0.6" fill="#7f93a6" stroke="#2f4559" stroke-width="1"/></g><g transform="translate(1232.5,254.5)"><path d="M0.5 4 L7.5 10 L0.5 16 Z" fill="#d3dde6" stroke="#2f4559" stroke-width="1.1" stroke-linejoin="round"/><path d="M19.5 4 L12.5 10 L19.5 16 Z" fill="#7f93a6" stroke="#2f4559" stroke-width="1.1" stroke-linejoin="round"/><path d="M10 0 V20" stroke="#7f93a6" stroke-width="1.1"/></g><g transform="translate(1270.5,254.5)"><path d="M3 5 H17 L16 19.5 H4 Z" fill="#7f93a6" stroke="#2f4559" stroke-width="1.2" stroke-linejoin="round"/><rect x="1" y="2.5" width="18" height="3" rx="0.8" fill="#d3dde6" stroke="#2f4559" stroke-width="1.1"/><rect x="8" y="0.5" width="4" height="2" fill="#d3dde6" stroke="#2f4559" stroke-width="0.9"/><path d="M7 8 V17 M10 8 V17 M13 8 V17" stroke="#a8bccd" stroke-width="0.9"/></g><g transform="translate(1042.5,292.5)"><rect x="0.5" y="4.5" width="16" height="4.5" rx="0.8" fill="#d3dde6" stroke="#2f4559" stroke-width="1.1"/><rect x="10" y="11" width="4" height="9" rx="0.6" fill="#d6e8fb" stroke="#1f80f0" stroke-width="1.1"/><path d="M10 1.5 H16.5 L15 0 M17.5 12 V18 L19.5 16" stroke="#1f80f0" stroke-width="1" fill="none"/></g><g transform="translate(1080.5,292.5)"><rect x="0.5" y="1" width="19" height="12" fill="#d3dde6" stroke="#2f4559" stroke-width="1.2"/><path d="M3.5 13 V6 M6.5 13 V9 M9.5 13 V6 M12.5 13 V9 M15.5 13 V6" stroke="#2f4559" stroke-width="1"/><path d="M0.5 17 H19.5 M0.5 15 V19 M19.5 15 V19" stroke="#2f4559" stroke-width="1"/></g><g transform="translate(1042.5,415.5)"><rect x="0" y="0.5" width="20" height="5" rx="1" fill="#d3dde6" stroke="#2f4559" stroke-width="1.1"/><path d="M7.5 6.5 V13 M12 6.5 V13" stroke="#7f93a6" stroke-width="1"/><rect x="4" y="14" width="12" height="5.5" rx="0.8" fill="#7f93a6" stroke="#2f4559" stroke-width="1.1"/></g><g transform="translate(1081,415.5)"><path d="M1 0.5 H19 L12 8.5 V19.5 L9 19 V8.5 Z" fill="#d3dde6" stroke="#2f4559" stroke-width="1.1" stroke-linejoin="round"/><path d="M11.5 8.5 L18.5 15.5 L15.5 15.5 L17 19.5 L15.5 20 L14 16.5 L11.5 18.5 Z" fill="#d6e8fb" stroke="#2b83ee" stroke-width="1.1" stroke-linejoin="round"/></g><g transform="translate(1119,415.5)"><path d="M0.5 0.5 H20 V3.5 L9.5 17 H4 L13.5 5 H0.5 Z" fill="#d3dde6" stroke="#2f4559" stroke-width="1.1" stroke-linejoin="round"/><path d="M11.5 11 L19 18.5 M19 11 L11.5 18.5" stroke="#e53935" stroke-width="1.1"/></g><g transform="translate(1157,415.5)"><path d="M10 0.5 C3 0.5 -0.5 5.5 1 11 C2 15 6 17 9 17 L10 11 L16 10.5 C19 10 19.5 7 18 5 C16 2 13 0.5 10 0.5 Z" fill="#d3dde6" stroke="#2f4559" stroke-width="1.1"/><circle cx="6.5" cy="4.5" r="1.3" fill="none" stroke="#2f4559" stroke-width="1"/><circle cx="12.5" cy="4.5" r="1.3" fill="none" stroke="#2f4559" stroke-width="1"/><circle cx="4.5" cy="9" r="1.3" fill="none" stroke="#2f4559" stroke-width="1"/><path d="M10.5 12 L12.5 9.5 H22 V18 L20 20.5 H10.5 Z" fill="#d6e8fb" stroke="#1f80f0" stroke-width="1.3" stroke-linejoin="round"/><path d="M14 12.5 V17 H19" stroke="#1f80f0" stroke-width="1.1" fill="none"/></g></svg>
<div class="a" style="left:1069px;top:402px;width:44px;height:46px;border:4px solid #e8141e;border-radius:2px"></div>
<div class="a" style="left:1030px;top:489px;width:288px;height:50px;background:#f5f6f8;border:1px solid #d5dae3;border-radius:2px"></div>
<svg style="left:1035px;top:499px" width="30" height="30" viewBox="0 0 30 30">
<g fill="none" stroke="#c6ced8" stroke-width="1">
<path d="M3 8 L11 4 L27 8 L27 22 L19 27 L3 23 Z"/><path d="M3 8 L19 12 L27 8 M19 12 V27"/>
<path d="M11 4 V19 L3 23 M11 19 L27 22" stroke-dasharray="1.5 1"/>
</g>
<g fill="#fff" stroke="#c6ced8" stroke-width="1"><circle cx="3" cy="8" r="1.8"/><circle cx="11" cy="4" r="1.8"/><circle cx="27" cy="8" r="1.8"/><circle cx="19" cy="12" r="1.8"/><circle cx="27" cy="22" r="1.8"/><circle cx="19" cy="27" r="1.8"/><circle cx="3" cy="23" r="1.8"/></g>
</svg>
<div class="t" style="left:1072px;top:500px;color:#151515;font-size:12px">基本墙</div>
<div class="t" style="left:1072px;top:514px;color:#151515;font-size:12px">*多种类型*</div>
<svg style="left:1305px;top:510px" width="10" height="7" viewBox="0 0 10 7"><path d="M1 1 L5 5 L9 1" stroke="#3f4a55" stroke-width="1.3" fill="none"/></svg>
<div class="a" style="left:1321px;top:489px;width:23px;height:24px;background:#f2f4f6;border:1px solid #d5dae3;border-radius:2px"></div>
<svg style="left:1325px;top:494px" width="14" height="14"><path d="M7 1 V13 M1 7 H13" stroke="#6c7784" stroke-width="1.4"/></svg>
<div class="a" style="left:1321px;top:516px;width:23px;height:23px;background:#f2f4f6;border:1px solid #d5dae3;border-radius:2px"></div>
<svg style="left:1326px;top:521px" width="13" height="13"><path d="M1 3 H12 M1 6.5 H12 M1 10 H12" stroke="#6c7784" stroke-width="1.1"/><path d="M8 1.5 V4.5 M4 5 V8 M8 8.5 V11.5" stroke="#6c7784" stroke-width="1.1"/></svg>
<div class="a" style="left:1338px;top:547px;width:6px;height:500px;background:#e3e6eb;border-radius:3px"></div>
<svg style="left:1033px;top:558px" width="10" height="7" viewBox="0 0 10 7"><path d="M1 1 L5 5 L9 1" stroke="#5b6673" stroke-width="1.3" fill="none"/></svg>
<div class="t" style="left:1049px;top:554px;color:#6a7480;font-size:12px">楼层信息</div>
<div class="t" style="left:1029px;top:582px;color:#151515;font-size:12px">所属楼层</div>
<div class="a" style="left:1111px;top:577px;width:226px;height:24px;background:#fff;border:1px solid #d5dae3;border-radius:2px"></div>
<div class="t" style="left:1114px;top:582px;color:#151515;font-size:13px">*多种*</div>
<svg style="left:1324px;top:587px" width="10" height="7" viewBox="0 0 10 7"><path d="M1 1 L5 5 L9 1" stroke="#3f4a55" stroke-width="1.3" fill="none"/></svg>
<svg style="left:1033px;top:620px" width="10" height="7" viewBox="0 0 10 7"><path d="M1 1 L5 5 L9 1" stroke="#5b6673" stroke-width="1.3" fill="none"/></svg>
<div class="t" style="left:1049px;top:616px;color:#6a7480;font-size:12px">定位信息</div>
<div class="t" style="left:1029px;top:645px;color:#151515;font-size:12px">定位线</div>
<div class="a" style="left:1111px;top:640px;width:226px;height:24px;background:#fff;border:1px solid #d5dae3;border-radius:2px"></div>
<div class="t" style="left:1114px;top:645px;color:#151515;font-size:13px">*多种*</div>
<svg style="left:1324px;top:650px" width="10" height="7" viewBox="0 0 10 7"><path d="M1 1 L5 5 L9 1" stroke="#3f4a55" stroke-width="1.3" fill="none"/></svg>
<div class="t" style="left:1029px;top:676px;color:#151515;font-size:12px">高度</div>
<div class="a" style="left:1111px;top:671px;width:226px;height:24px;background:#e9ecef;border:1px solid #d5dae3;border-radius:2px"></div>
<div class="t" style="left:1114px;top:676px;color:#151515;font-size:13px">*多种*</div>
<div class="t" style="left:1029px;top:708px;color:#151515;font-size:12px">底部标高</div>
<div class="a" style="left:1111px;top:703px;width:226px;height:24px;background:#fff;border:1px solid #d5dae3;border-radius:2px"></div>
<div class="t" style="left:1114px;top:708px;color:#151515;font-size:13px">*多种*</div>
<svg style="left:1324px;top:713px" width="10" height="7" viewBox="0 0 10 7"><path d="M1 1 L5 5 L9 1" stroke="#3f4a55" stroke-width="1.3" fill="none"/></svg>
<div class="t" style="left:1029px;top:739px;color:#151515;font-size:12px">底部偏移</div>
<div class="a" style="left:1111px;top:734px;width:226px;height:24px;background:#fff;border:1px solid #d5dae3;border-radius:2px"></div>
<div class="t" style="left:1114px;top:739px;color:#151515;font-size:13px">*多种*</div>
<div class="t" style="left:1029px;top:771px;color:#151515;font-size:12px">顶部标高</div>
<div class="a" style="left:1111px;top:766px;width:226px;height:24px;background:#fff;border:1px solid #d5dae3;border-radius:2px"></div>
<div class="t" style="left:1114px;top:771px;color:#151515;font-size:13px">*多种*</div>
<svg style="left:1324px;top:776px" width="10" height="7" viewBox="0 0 10 7"><path d="M1 1 L5 5 L9 1" stroke="#3f4a55" stroke-width="1.3" fill="none"/></svg>
<div class="t" style="left:1029px;top:803px;color:#151515;font-size:12px">顶部偏移</div>
<div class="a" style="left:1111px;top:798px;width:226px;height:24px;background:#fff;border:1px solid #d5dae3;border-radius:2px"></div>
<div class="t" style="left:1114px;top:803px;color:#151515;font-size:13px">*多种*</div>
<svg style="left:1033px;top:842px" width="10" height="7" viewBox="0 0 10 7"><path d="M1 1 L5 5 L9 1" stroke="#5b6673" stroke-width="1.3" fill="none"/></svg>
<div class="t" style="left:1049px;top:838px;color:#6a7480;font-size:12px">材料信息</div>
<div class="t" style="left:1029px;top:866px;color:#151515;font-size:12px">材料</div>
<div class="a" style="left:1111px;top:861px;width:226px;height:24px;background:#fff;border:1px solid #d5dae3;border-radius:2px"></div>
<div class="t" style="left:1114px;top:866px;color:#151515;font-size:13px">*多种*</div>
<svg style="left:1324px;top:871px" width="10" height="7" viewBox="0 0 10 7"><path d="M1 1 L5 5 L9 1" stroke="#3f4a55" stroke-width="1.3" fill="none"/></svg>
<svg style="left:1033px;top:904px" width="10" height="7" viewBox="0 0 10 7"><path d="M1 1 L5 5 L9 1" stroke="#5b6673" stroke-width="1.3" fill="none"/></svg>
<div class="t" style="left:1049px;top:900px;color:#6a7480;font-size:12px">尺寸标注</div>
<div class="t" style="left:1029px;top:928px;color:#151515;font-size:12px">长度</div>
<div class="t" style="left:1029px;top:960px;color:#151515;font-size:12px">面积</div>
<div class="t" style="left:1029px;top:991px;color:#151515;font-size:12px">体积</div>
<svg style="left:1033px;top:1030px" width="10" height="7" viewBox="0 0 10 7"><path d="M1 1 L5 5 L9 1" stroke="#5b6673" stroke-width="1.3" fill="none"/></svg>
<div class="t" style="left:1049px;top:1026px;color:#6a7480;font-size:12px">结构信息</div>
<div class="a" style="left:1113px;top:886px;width:226px;height:142px;background:#9a9a9a;opacity:.45;filter:blur(1.5px)"></div>
<div class="a" style="left:1111px;top:884px;width:226px;height:142px;background:#fff;border:1px solid #c9ced6;border-top:none"></div>
<div class="a" style="left:1328px;top:885px;width:8px;height:140px;background:#f0f0f0"></div>
<div class="a" style="left:1329px;top:885px;width:6px;height:92px;background:#e2e2e2"></div>
<div class="t" style="left:1115px;top:885px;color:#111;font-size:12px">无</div>
<div class="t" style="left:1115px;top:899px;color:#111;font-size:12px">装饰柱</div>
<div class="a" style="left:1112px;top:912px;width:216px;height:14px;background:#0a74d6"></div>
<div class="t" style="left:1115px;top:913px;color:#fff;font-size:12px">深色砖石</div>
<div class="t" style="left:1115px;top:927px;color:#111;font-size:12px">浅色石砖</div>
<div class="t" style="left:1115px;top:941px;color:#111;font-size:12px">装饰墙面</div>
<div class="t" style="left:1115px;top:955px;color:#111;font-size:12px">钢筋砼</div>
<div class="t" style="left:1115px;top:969px;color:#111;font-size:12px">混凝土</div>
<div class="t" style="left:1115px;top:983px;color:#111;font-size:12px">石材</div>
<div class="t" style="left:1115px;top:997px;color:#111;font-size:12px">砖</div>
<div class="t" style="left:1115px;top:1011px;color:#111;font-size:12px">耐火砖</div>
<div class="a" style="left:2px;top:1055px;width:1357px;height:25px;background:#eceff2"></div>
<div class="a" style="left:2px;top:1079px;width:1357px;height:1px;background:#cfd5de"></div>
<div class="a" style="left:112px;top:1055px;width:2px;height:24px;background:#d5dae3"></div>
<div class="a" style="left:1158px;top:1055px;width:2px;height:24px;background:#d5dae3"></div>
<div class="a" style="left:1230px;top:1055px;width:2px;height:24px;background:#d5dae3"></div>
<svg style="left:0;top:0" width="1359" height="1080"><rect x="22.5" y="1059.5" width="6" height="6" rx="1" fill="#d3dde6" stroke="#2f4559" stroke-width="1.3"/><rect x="30.5" y="1059.5" width="6" height="6" rx="1" fill="#d3dde6" stroke="#2f4559" stroke-width="1.3"/><rect x="30.5" y="1067.5" width="6" height="6" rx="1" fill="#d3dde6" stroke="#2f4559" stroke-width="1.3"/><rect x="22.5" y="1067.5" width="6" height="6" fill="none" stroke="#2f4559" stroke-width="1.3" stroke-dasharray="2 2"/><rect x="54.5" y="1059.5" width="6" height="6" fill="none" stroke="#b4c3d1" stroke-width="1.2"/><rect x="62.5" y="1059.5" width="6" height="6" fill="none" stroke="#b4c3d1" stroke-width="1.2"/><rect x="62.5" y="1067.5" width="6" height="6" fill="none" stroke="#b4c3d1" stroke-width="1.2"/><rect x="54.5" y="1067.5" width="6" height="6" rx="1" fill="#d3dde6" stroke="#2f4559" stroke-width="1.3"/><rect x="86.5" y="1059.5" width="6" height="6" rx="1" fill="#d3dde6" stroke="#2f4559" stroke-width="1.3"/><rect x="94.5" y="1059.5" width="6" height="6" rx="1" fill="#d3dde6" stroke="#2f4559" stroke-width="1.3"/><rect x="86.5" y="1067.5" width="6" height="6" rx="1" fill="#d3dde6" stroke="#2f4559" stroke-width="1.3"/><path d="M95 1068 L94 1070.5 L96.5 1070.5 M94.5 1070 A3.2 3.2 0 1 1 96 1074" stroke="#1f80f0" stroke-width="1.3" fill="none"/><rect x="1173" y="1061" width="5" height="3" fill="#2f4559"/><rect x="1173" y="1066" width="5" height="3" fill="#2f4559"/><rect x="1173" y="1071" width="5" height="3" fill="#2f4559"/><path d="M1180.5 1060 V1075 M1182 1062 H1187 M1182 1067 H1187 M1182 1072 H1187" stroke="#2f4559" stroke-width="1"/><path d="M1206 1060 V1073.5 H1219 M1206 1063.5 H1214.5 V1073.5" stroke="#2f4559" stroke-width="1.3" fill="none"/><circle cx="1252" cy="1067" r="6.7" fill="#d3dde6" stroke="#2f4559" stroke-width="1.3"/><path d="M1249 1070.5 L1252 1063 L1255 1070.5 M1250 1068.5 H1254" stroke="#2f4559" stroke-width="1.2" fill="none"/><rect x="1277.5" y="1060.5" width="13" height="13" rx="1" fill="#d3dde6" stroke="#2f4559" stroke-width="1.3"/><rect x="1277" y="1060" width="14" height="3" fill="#2f4559"/><circle cx="1287.5" cy="1072" r="3.5" fill="#fff"/><path d="M1285 1074.5 V1071 A2.5 2.5 0 0 1 1290 1071 V1074.5" stroke="#1f80f0" stroke-width="1.5" fill="none"/><path d="M1309.5 1063 L1311.5 1060.5 H1322.5 V1071 L1320.5 1073.5 H1309.5 Z" fill="#a9a9a9" stroke="#555" stroke-width="1.2" stroke-linejoin="round"/><path d="M1310 1063 H1320.5 L1322.5 1060.5 M1320.5 1063 V1073.5" stroke="#d5d5d5" stroke-width="0.8" fill="none"/><circle cx="1347.5" cy="1066.5" r="5.5" fill="#b4c8da" stroke="#2f4559" stroke-width="1.2"/><path d="M1347.5 1063.5 V1069.5 M1344.5 1066.5 H1350.5 M1351.5 1070.5 L1353.5 1072.5" stroke="#2f4559" stroke-width="1.2"/><path d="M1341 1062 V1060 H1343 M1352 1060 H1354 V1062 M1354 1071 V1073 H1352 M1343 1073 H1341 V1071" stroke="#2f4559" stroke-width="1.2" fill="none"/></svg>
<div class="t" style="left:748px;top:333px;font-size:23.5px;line-height:28px;font-weight:bold;color:#e8141e;-webkit-text-stroke:0.3px #e8141e;text-shadow:2.60px 0.00px 0 #fff,2.40px 0.99px 0 #fff,1.84px 1.84px 0 #fff,0.99px 2.40px 0 #fff,0.00px 2.60px 0 #fff,-0.99px 2.40px 0 #fff,-1.84px 1.84px 0 #fff,-2.40px 0.99px 0 #fff,-2.60px 0.00px 0 #fff,-2.40px -0.99px 0 #fff,-1.84px -1.84px 0 #fff,-0.99px -2.40px 0 #fff,-0.00px -2.60px 0 #fff,0.99px -2.40px 0 #fff,1.84px -1.84px 0 #fff,2.40px -0.99px 0 #fff,1px 3.5px 2px rgba(0,0,0,.35)">1、框选</div>
<div class="t" style="left:1090px;top:368px;font-size:23.5px;line-height:28px;font-weight:bold;color:#e8141e;-webkit-text-stroke:0.3px #e8141e;text-shadow:2.60px 0.00px 0 #fff,2.40px 0.99px 0 #fff,1.84px 1.84px 0 #fff,0.99px 2.40px 0 #fff,0.00px 2.60px 0 #fff,-0.99px 2.40px 0 #fff,-1.84px 1.84px 0 #fff,-2.40px 0.99px 0 #fff,-2.60px 0.00px 0 #fff,-2.40px -0.99px 0 #fff,-1.84px -1.84px 0 #fff,-0.99px -2.40px 0 #fff,-0.00px -2.60px 0 #fff,0.99px -2.40px 0 #fff,1.84px -1.84px 0 #fff,2.40px -0.99px 0 #fff,1px 3.5px 2px rgba(0,0,0,.35)">2、过滤选择</div>
<div class="t" style="left:1176px;top:904px;font-size:23.5px;line-height:28px;font-weight:bold;color:#e8141e;-webkit-text-stroke:0.3px #e8141e;text-shadow:2.60px 0.00px 0 #fff,2.40px 0.99px 0 #fff,1.84px 1.84px 0 #fff,0.99px 2.40px 0 #fff,0.00px 2.60px 0 #fff,-0.99px 2.40px 0 #fff,-1.84px 1.84px 0 #fff,-2.40px 0.99px 0 #fff,-2.60px 0.00px 0 #fff,-2.40px -0.99px 0 #fff,-1.84px -1.84px 0 #fff,-0.99px -2.40px 0 #fff,-0.00px -2.60px 0 #fff,0.99px -2.40px 0 #fff,1.84px -1.84px 0 #fff,2.40px -0.99px 0 #fff,1px 3.5px 2px rgba(0,0,0,.35)">3、选择材料</div></body></html>
